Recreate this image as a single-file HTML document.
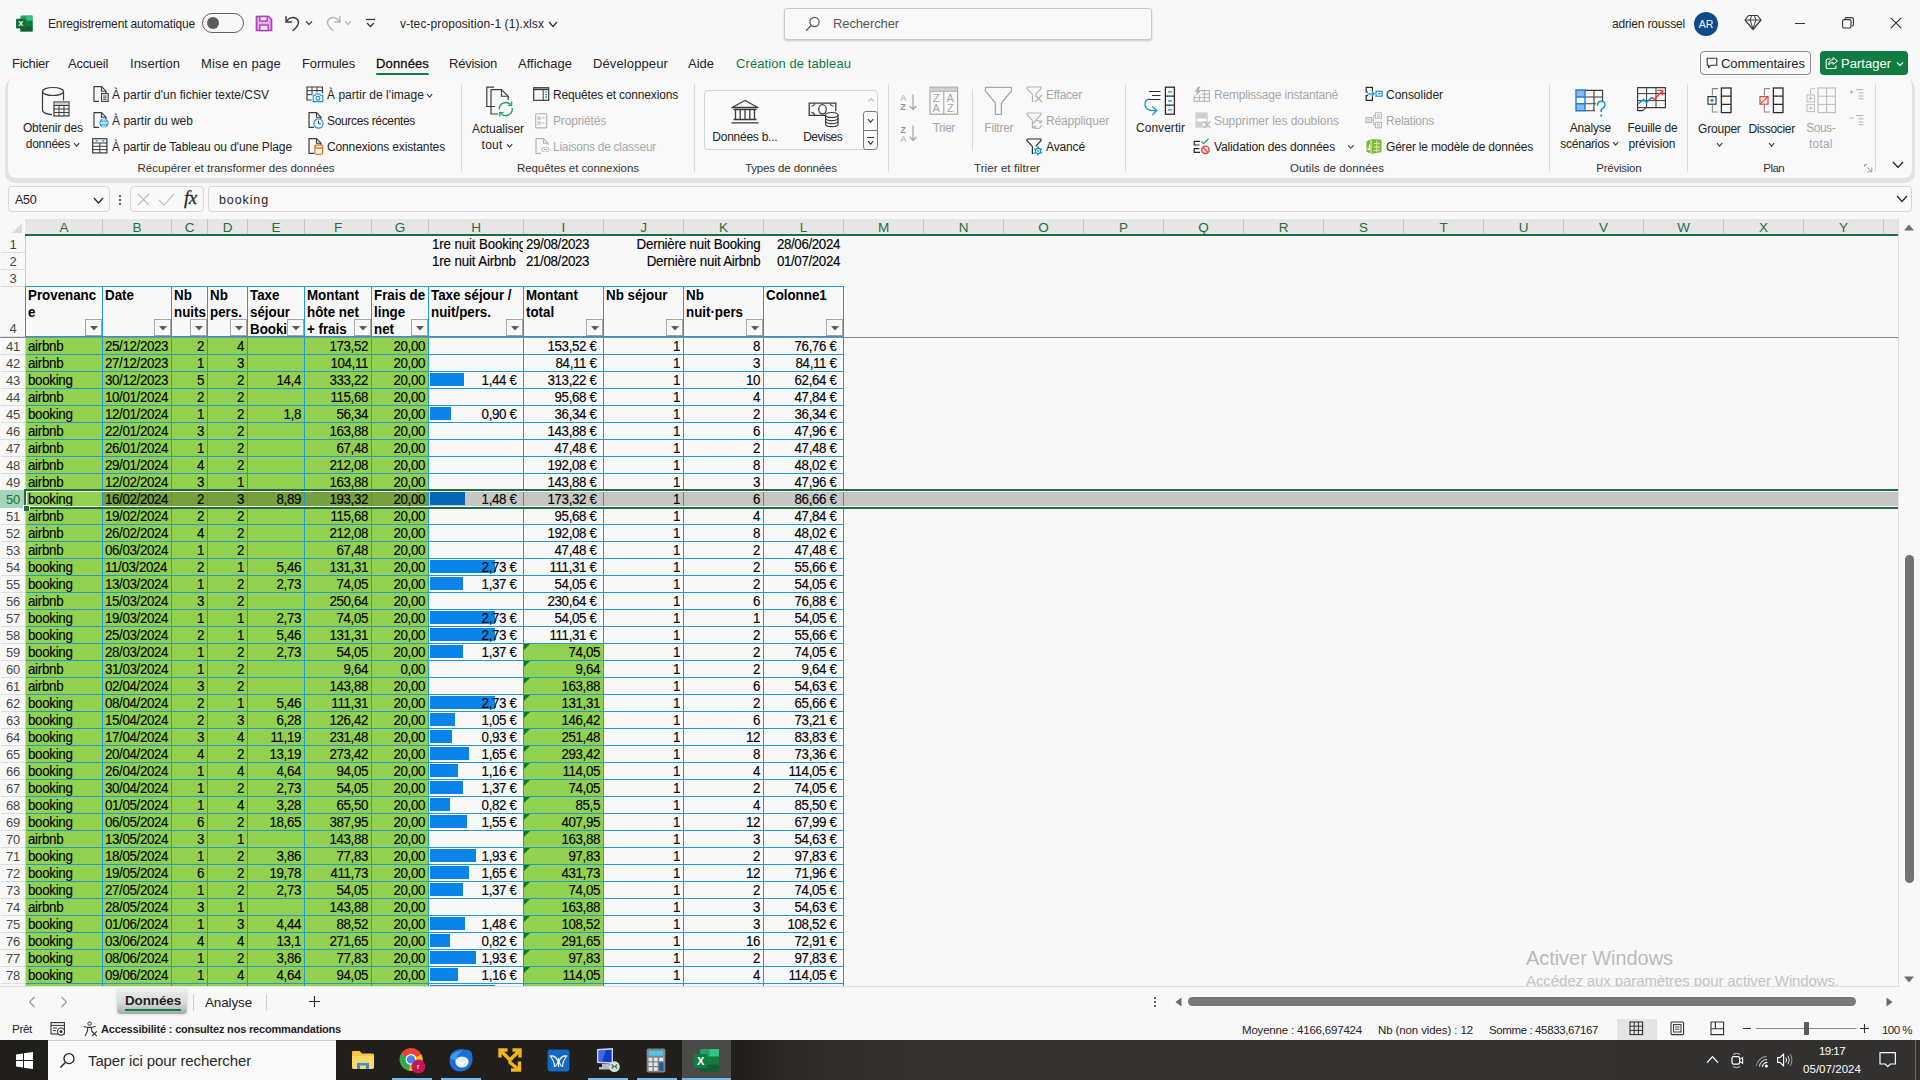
<!DOCTYPE html>
<html lang="fr"><head><meta charset="utf-8"><title>v-tec-proposition-1 (1).xlsx - Excel</title>
<style>
html,body{margin:0;padding:0;}
body{width:1920px;height:1080px;overflow:hidden;position:relative;background:#f8f8f8;font-family:"Liberation Sans",sans-serif;}
#app{position:absolute;left:0;top:0;width:1920px;height:1080px;overflow:hidden;}
#app div,#app svg{position:absolute;}
.t{white-space:nowrap;}
.c{font-family:"Liberation Sans",sans-serif;letter-spacing:-0.36px;-webkit-text-stroke:0.12px currentColor;transform:scaleY(1.035);transform-origin:0 13.1px;}
.b{letter-spacing:0;-webkit-text-stroke:0;}
</style></head><body><div id="app">
<div style="left:0px;top:219px;width:1920px;height:767px;background:#f8f8f8;"></div>
<div style="left:25px;top:219px;width:1873px;height:15px;background:#e6e6e6;"></div>
<div style="left:25px;top:234px;width:1873px;height:2px;background:#1e6e42;"></div>
<div class="t" style="top:220.0px;font-size:13.5px;line-height:16px;color:#1e6e42;left:-236.0px;width:600px;text-align:center;">A</div>
<div class="t" style="top:220.0px;font-size:13.5px;line-height:16px;color:#1e6e42;left:-163.0px;width:600px;text-align:center;">B</div>
<div class="t" style="top:220.0px;font-size:13.5px;line-height:16px;color:#1e6e42;left:-110.5px;width:600px;text-align:center;">C</div>
<div class="t" style="top:220.0px;font-size:13.5px;line-height:16px;color:#1e6e42;left:-72.5px;width:600px;text-align:center;">D</div>
<div class="t" style="top:220.0px;font-size:13.5px;line-height:16px;color:#1e6e42;left:-24.0px;width:600px;text-align:center;">E</div>
<div class="t" style="top:220.0px;font-size:13.5px;line-height:16px;color:#1e6e42;left:38.0px;width:600px;text-align:center;">F</div>
<div class="t" style="top:220.0px;font-size:13.5px;line-height:16px;color:#1e6e42;left:100.0px;width:600px;text-align:center;">G</div>
<div class="t" style="top:220.0px;font-size:13.5px;line-height:16px;color:#1e6e42;left:176.0px;width:600px;text-align:center;">H</div>
<div class="t" style="top:220.0px;font-size:13.5px;line-height:16px;color:#1e6e42;left:263.5px;width:600px;text-align:center;">I</div>
<div class="t" style="top:220.0px;font-size:13.5px;line-height:16px;color:#1e6e42;left:343.5px;width:600px;text-align:center;">J</div>
<div class="t" style="top:220.0px;font-size:13.5px;line-height:16px;color:#1e6e42;left:423.5px;width:600px;text-align:center;">K</div>
<div class="t" style="top:220.0px;font-size:13.5px;line-height:16px;color:#1e6e42;left:503.5px;width:600px;text-align:center;">L</div>
<div class="t" style="top:220.0px;font-size:13.5px;line-height:16px;color:#1e6e42;left:583.5px;width:600px;text-align:center;">M</div>
<div class="t" style="top:220.0px;font-size:13.5px;line-height:16px;color:#1e6e42;left:663.5px;width:600px;text-align:center;">N</div>
<div class="t" style="top:220.0px;font-size:13.5px;line-height:16px;color:#1e6e42;left:743.5px;width:600px;text-align:center;">O</div>
<div class="t" style="top:220.0px;font-size:13.5px;line-height:16px;color:#1e6e42;left:823.5px;width:600px;text-align:center;">P</div>
<div class="t" style="top:220.0px;font-size:13.5px;line-height:16px;color:#1e6e42;left:903.5px;width:600px;text-align:center;">Q</div>
<div class="t" style="top:220.0px;font-size:13.5px;line-height:16px;color:#1e6e42;left:983.5px;width:600px;text-align:center;">R</div>
<div class="t" style="top:220.0px;font-size:13.5px;line-height:16px;color:#1e6e42;left:1063.5px;width:600px;text-align:center;">S</div>
<div class="t" style="top:220.0px;font-size:13.5px;line-height:16px;color:#1e6e42;left:1143.5px;width:600px;text-align:center;">T</div>
<div class="t" style="top:220.0px;font-size:13.5px;line-height:16px;color:#1e6e42;left:1223.5px;width:600px;text-align:center;">U</div>
<div class="t" style="top:220.0px;font-size:13.5px;line-height:16px;color:#1e6e42;left:1303.5px;width:600px;text-align:center;">V</div>
<div class="t" style="top:220.0px;font-size:13.5px;line-height:16px;color:#1e6e42;left:1383.5px;width:600px;text-align:center;">W</div>
<div class="t" style="top:220.0px;font-size:13.5px;line-height:16px;color:#1e6e42;left:1463.5px;width:600px;text-align:center;">X</div>
<div class="t" style="top:220.0px;font-size:13.5px;line-height:16px;color:#1e6e42;left:1543.5px;width:600px;text-align:center;">Y</div>
<div style="left:102px;top:219px;width:1px;height:15px;background:#c6c6c6;"></div>
<div style="left:171px;top:219px;width:1px;height:15px;background:#c6c6c6;"></div>
<div style="left:207px;top:219px;width:1px;height:15px;background:#c6c6c6;"></div>
<div style="left:247px;top:219px;width:1px;height:15px;background:#c6c6c6;"></div>
<div style="left:304px;top:219px;width:1px;height:15px;background:#c6c6c6;"></div>
<div style="left:371px;top:219px;width:1px;height:15px;background:#c6c6c6;"></div>
<div style="left:428px;top:219px;width:1px;height:15px;background:#c6c6c6;"></div>
<div style="left:523px;top:219px;width:1px;height:15px;background:#c6c6c6;"></div>
<div style="left:603px;top:219px;width:1px;height:15px;background:#c6c6c6;"></div>
<div style="left:683px;top:219px;width:1px;height:15px;background:#c6c6c6;"></div>
<div style="left:763px;top:219px;width:1px;height:15px;background:#c6c6c6;"></div>
<div style="left:843px;top:219px;width:1px;height:15px;background:#c6c6c6;"></div>
<div style="left:923px;top:219px;width:1px;height:15px;background:#c6c6c6;"></div>
<div style="left:1003px;top:219px;width:1px;height:15px;background:#c6c6c6;"></div>
<div style="left:1083px;top:219px;width:1px;height:15px;background:#c6c6c6;"></div>
<div style="left:1163px;top:219px;width:1px;height:15px;background:#c6c6c6;"></div>
<div style="left:1243px;top:219px;width:1px;height:15px;background:#c6c6c6;"></div>
<div style="left:1323px;top:219px;width:1px;height:15px;background:#c6c6c6;"></div>
<div style="left:1403px;top:219px;width:1px;height:15px;background:#c6c6c6;"></div>
<div style="left:1483px;top:219px;width:1px;height:15px;background:#c6c6c6;"></div>
<div style="left:1563px;top:219px;width:1px;height:15px;background:#c6c6c6;"></div>
<div style="left:1643px;top:219px;width:1px;height:15px;background:#c6c6c6;"></div>
<div style="left:1723px;top:219px;width:1px;height:15px;background:#c6c6c6;"></div>
<div style="left:1803px;top:219px;width:1px;height:15px;background:#c6c6c6;"></div>
<div style="left:1883px;top:219px;width:1px;height:15px;background:#c6c6c6;"></div>
<div style="left:1963px;top:219px;width:1px;height:15px;background:#c6c6c6;"></div>
<svg style="left:11px;top:223px;" width="12" height="11" viewBox="0 0 12 11" fill="none"><path d="M11 0 V10 H1 Z" fill="#dcdcdc"/></svg>
<div style="left:1px;top:252px;width:24px;height:1px;background:#dcdcdc;"></div>
<div class="t" style="top:236.0px;font-size:13px;line-height:17px;color:#484848;left:-287px;width:600px;text-align:center;letter-spacing:-0.2px;">1</div>
<div style="left:1px;top:269px;width:24px;height:1px;background:#dcdcdc;"></div>
<div class="t" style="top:253.0px;font-size:13px;line-height:17px;color:#484848;left:-287px;width:600px;text-align:center;letter-spacing:-0.2px;">2</div>
<div style="left:1px;top:286px;width:24px;height:1px;background:#dcdcdc;"></div>
<div class="t" style="top:270.0px;font-size:13px;line-height:17px;color:#484848;left:-287px;width:600px;text-align:center;letter-spacing:-0.2px;">3</div>
<div style="left:1px;top:336px;width:24px;height:1px;background:#dcdcdc;"></div>
<div class="t" style="top:320.0px;font-size:13px;line-height:17px;color:#484848;left:-287px;width:600px;text-align:center;letter-spacing:-0.2px;">4</div>
<div style="left:1px;top:354px;width:24px;height:1px;background:#dcdcdc;"></div>
<div class="t" style="top:338.0px;font-size:13px;line-height:17px;color:#484848;left:-287px;width:600px;text-align:center;letter-spacing:-0.2px;">41</div>
<div style="left:1px;top:371px;width:24px;height:1px;background:#dcdcdc;"></div>
<div class="t" style="top:355.0px;font-size:13px;line-height:17px;color:#484848;left:-287px;width:600px;text-align:center;letter-spacing:-0.2px;">42</div>
<div style="left:1px;top:388px;width:24px;height:1px;background:#dcdcdc;"></div>
<div class="t" style="top:372.0px;font-size:13px;line-height:17px;color:#484848;left:-287px;width:600px;text-align:center;letter-spacing:-0.2px;">43</div>
<div style="left:1px;top:405px;width:24px;height:1px;background:#dcdcdc;"></div>
<div class="t" style="top:389.0px;font-size:13px;line-height:17px;color:#484848;left:-287px;width:600px;text-align:center;letter-spacing:-0.2px;">44</div>
<div style="left:1px;top:422px;width:24px;height:1px;background:#dcdcdc;"></div>
<div class="t" style="top:406.0px;font-size:13px;line-height:17px;color:#484848;left:-287px;width:600px;text-align:center;letter-spacing:-0.2px;">45</div>
<div style="left:1px;top:439px;width:24px;height:1px;background:#dcdcdc;"></div>
<div class="t" style="top:423.0px;font-size:13px;line-height:17px;color:#484848;left:-287px;width:600px;text-align:center;letter-spacing:-0.2px;">46</div>
<div style="left:1px;top:456px;width:24px;height:1px;background:#dcdcdc;"></div>
<div class="t" style="top:440.0px;font-size:13px;line-height:17px;color:#484848;left:-287px;width:600px;text-align:center;letter-spacing:-0.2px;">47</div>
<div style="left:1px;top:473px;width:24px;height:1px;background:#dcdcdc;"></div>
<div class="t" style="top:457.0px;font-size:13px;line-height:17px;color:#484848;left:-287px;width:600px;text-align:center;letter-spacing:-0.2px;">48</div>
<div style="left:1px;top:490px;width:24px;height:1px;background:#dcdcdc;"></div>
<div class="t" style="top:474.0px;font-size:13px;line-height:17px;color:#484848;left:-287px;width:600px;text-align:center;letter-spacing:-0.2px;">49</div>
<div style="left:0px;top:490px;width:25px;height:18px;background:#a3d6b8;"></div>
<div class="t" style="top:491.0px;font-size:13px;line-height:17px;color:#1e6e42;left:-287px;width:600px;text-align:center;letter-spacing:-0.2px;">50</div>
<div style="left:1px;top:524px;width:24px;height:1px;background:#dcdcdc;"></div>
<div class="t" style="top:508.0px;font-size:13px;line-height:17px;color:#484848;left:-287px;width:600px;text-align:center;letter-spacing:-0.2px;">51</div>
<div style="left:1px;top:541px;width:24px;height:1px;background:#dcdcdc;"></div>
<div class="t" style="top:525.0px;font-size:13px;line-height:17px;color:#484848;left:-287px;width:600px;text-align:center;letter-spacing:-0.2px;">52</div>
<div style="left:1px;top:558px;width:24px;height:1px;background:#dcdcdc;"></div>
<div class="t" style="top:542.0px;font-size:13px;line-height:17px;color:#484848;left:-287px;width:600px;text-align:center;letter-spacing:-0.2px;">53</div>
<div style="left:1px;top:575px;width:24px;height:1px;background:#dcdcdc;"></div>
<div class="t" style="top:559.0px;font-size:13px;line-height:17px;color:#484848;left:-287px;width:600px;text-align:center;letter-spacing:-0.2px;">54</div>
<div style="left:1px;top:592px;width:24px;height:1px;background:#dcdcdc;"></div>
<div class="t" style="top:576.0px;font-size:13px;line-height:17px;color:#484848;left:-287px;width:600px;text-align:center;letter-spacing:-0.2px;">55</div>
<div style="left:1px;top:609px;width:24px;height:1px;background:#dcdcdc;"></div>
<div class="t" style="top:593.0px;font-size:13px;line-height:17px;color:#484848;left:-287px;width:600px;text-align:center;letter-spacing:-0.2px;">56</div>
<div style="left:1px;top:626px;width:24px;height:1px;background:#dcdcdc;"></div>
<div class="t" style="top:610.0px;font-size:13px;line-height:17px;color:#484848;left:-287px;width:600px;text-align:center;letter-spacing:-0.2px;">57</div>
<div style="left:1px;top:643px;width:24px;height:1px;background:#dcdcdc;"></div>
<div class="t" style="top:627.0px;font-size:13px;line-height:17px;color:#484848;left:-287px;width:600px;text-align:center;letter-spacing:-0.2px;">58</div>
<div style="left:1px;top:660px;width:24px;height:1px;background:#dcdcdc;"></div>
<div class="t" style="top:644.0px;font-size:13px;line-height:17px;color:#484848;left:-287px;width:600px;text-align:center;letter-spacing:-0.2px;">59</div>
<div style="left:1px;top:677px;width:24px;height:1px;background:#dcdcdc;"></div>
<div class="t" style="top:661.0px;font-size:13px;line-height:17px;color:#484848;left:-287px;width:600px;text-align:center;letter-spacing:-0.2px;">60</div>
<div style="left:1px;top:694px;width:24px;height:1px;background:#dcdcdc;"></div>
<div class="t" style="top:678.0px;font-size:13px;line-height:17px;color:#484848;left:-287px;width:600px;text-align:center;letter-spacing:-0.2px;">61</div>
<div style="left:1px;top:711px;width:24px;height:1px;background:#dcdcdc;"></div>
<div class="t" style="top:695.0px;font-size:13px;line-height:17px;color:#484848;left:-287px;width:600px;text-align:center;letter-spacing:-0.2px;">62</div>
<div style="left:1px;top:728px;width:24px;height:1px;background:#dcdcdc;"></div>
<div class="t" style="top:712.0px;font-size:13px;line-height:17px;color:#484848;left:-287px;width:600px;text-align:center;letter-spacing:-0.2px;">63</div>
<div style="left:1px;top:745px;width:24px;height:1px;background:#dcdcdc;"></div>
<div class="t" style="top:729.0px;font-size:13px;line-height:17px;color:#484848;left:-287px;width:600px;text-align:center;letter-spacing:-0.2px;">64</div>
<div style="left:1px;top:762px;width:24px;height:1px;background:#dcdcdc;"></div>
<div class="t" style="top:746.0px;font-size:13px;line-height:17px;color:#484848;left:-287px;width:600px;text-align:center;letter-spacing:-0.2px;">65</div>
<div style="left:1px;top:779px;width:24px;height:1px;background:#dcdcdc;"></div>
<div class="t" style="top:763.0px;font-size:13px;line-height:17px;color:#484848;left:-287px;width:600px;text-align:center;letter-spacing:-0.2px;">66</div>
<div style="left:1px;top:796px;width:24px;height:1px;background:#dcdcdc;"></div>
<div class="t" style="top:780.0px;font-size:13px;line-height:17px;color:#484848;left:-287px;width:600px;text-align:center;letter-spacing:-0.2px;">67</div>
<div style="left:1px;top:813px;width:24px;height:1px;background:#dcdcdc;"></div>
<div class="t" style="top:797.0px;font-size:13px;line-height:17px;color:#484848;left:-287px;width:600px;text-align:center;letter-spacing:-0.2px;">68</div>
<div style="left:1px;top:830px;width:24px;height:1px;background:#dcdcdc;"></div>
<div class="t" style="top:814.0px;font-size:13px;line-height:17px;color:#484848;left:-287px;width:600px;text-align:center;letter-spacing:-0.2px;">69</div>
<div style="left:1px;top:847px;width:24px;height:1px;background:#dcdcdc;"></div>
<div class="t" style="top:831.0px;font-size:13px;line-height:17px;color:#484848;left:-287px;width:600px;text-align:center;letter-spacing:-0.2px;">70</div>
<div style="left:1px;top:864px;width:24px;height:1px;background:#dcdcdc;"></div>
<div class="t" style="top:848.0px;font-size:13px;line-height:17px;color:#484848;left:-287px;width:600px;text-align:center;letter-spacing:-0.2px;">71</div>
<div style="left:1px;top:881px;width:24px;height:1px;background:#dcdcdc;"></div>
<div class="t" style="top:865.0px;font-size:13px;line-height:17px;color:#484848;left:-287px;width:600px;text-align:center;letter-spacing:-0.2px;">72</div>
<div style="left:1px;top:898px;width:24px;height:1px;background:#dcdcdc;"></div>
<div class="t" style="top:882.0px;font-size:13px;line-height:17px;color:#484848;left:-287px;width:600px;text-align:center;letter-spacing:-0.2px;">73</div>
<div style="left:1px;top:915px;width:24px;height:1px;background:#dcdcdc;"></div>
<div class="t" style="top:899.0px;font-size:13px;line-height:17px;color:#484848;left:-287px;width:600px;text-align:center;letter-spacing:-0.2px;">74</div>
<div style="left:1px;top:932px;width:24px;height:1px;background:#dcdcdc;"></div>
<div class="t" style="top:916.0px;font-size:13px;line-height:17px;color:#484848;left:-287px;width:600px;text-align:center;letter-spacing:-0.2px;">75</div>
<div style="left:1px;top:949px;width:24px;height:1px;background:#dcdcdc;"></div>
<div class="t" style="top:933.0px;font-size:13px;line-height:17px;color:#484848;left:-287px;width:600px;text-align:center;letter-spacing:-0.2px;">76</div>
<div style="left:1px;top:966px;width:24px;height:1px;background:#dcdcdc;"></div>
<div class="t" style="top:950.0px;font-size:13px;line-height:17px;color:#484848;left:-287px;width:600px;text-align:center;letter-spacing:-0.2px;">77</div>
<div style="left:1px;top:983px;width:24px;height:1px;background:#dcdcdc;"></div>
<div class="t" style="top:967.0px;font-size:13px;line-height:17px;color:#484848;left:-287px;width:600px;text-align:center;letter-spacing:-0.2px;">78</div>
<div class="t c" style="top:236.0px;height:17px;line-height:17px;font-size:13.33px;color:#000;left:432px;letter-spacing:-0.14px;width:91px;overflow:hidden;">1re nuit Booking</div>
<div class="t c" style="top:253.0px;height:17px;line-height:17px;font-size:13.33px;color:#000;left:432px;letter-spacing:-0.14px;">1re nuit Airbnb</div>
<div class="t c" style="top:236.0px;height:17px;line-height:17px;font-size:13.33px;color:#000;left:526px;">29/08/2023</div>
<div class="t c" style="top:253.0px;height:17px;line-height:17px;font-size:13.33px;color:#000;left:526px;">21/08/2023</div>
<div class="t c" style="top:236.0px;height:17px;line-height:17px;font-size:13.33px;color:#000;right:1159.5px;letter-spacing:-0.2px;">Dernière nuit Booking</div>
<div class="t c" style="top:253.0px;height:17px;line-height:17px;font-size:13.33px;color:#000;right:1159.5px;letter-spacing:-0.2px;">Dernière nuit Airbnb</div>
<div class="t c" style="top:236.0px;height:17px;line-height:17px;font-size:13.33px;color:#000;right:1080px;">28/06/2024</div>
<div class="t c" style="top:253.0px;height:17px;line-height:17px;font-size:13.33px;color:#000;right:1080px;">01/07/2024</div>
<div class="t c b" style="top:287.0px;height:17px;line-height:17px;font-size:13.33px;color:#000;font-weight:700;left:28px;">Provenanc</div>
<div class="t c b" style="top:304.0px;height:17px;line-height:17px;font-size:13.33px;color:#000;font-weight:700;left:28px;">e</div>
<div style="left:85px;top:319px;width:17px;height:17px;background:#f8f8f8;border:1px solid #a6a6a6;box-sizing:border-box;"></div>
<svg style="left:89.5px;top:326px;" width="8" height="5" viewBox="0 0 8 5" fill="none"><path d="M0 0 H8 L4 4.5 Z" fill="#5a5a5a"/></svg>
<div class="t c b" style="top:287.0px;height:17px;line-height:17px;font-size:13.33px;color:#000;font-weight:700;left:105px;">Date</div>
<div style="left:154px;top:319px;width:17px;height:17px;background:#f8f8f8;border:1px solid #a6a6a6;box-sizing:border-box;"></div>
<svg style="left:158.5px;top:326px;" width="8" height="5" viewBox="0 0 8 5" fill="none"><path d="M0 0 H8 L4 4.5 Z" fill="#5a5a5a"/></svg>
<div class="t c b" style="top:287.0px;height:17px;line-height:17px;font-size:13.33px;color:#000;font-weight:700;left:174px;">Nb</div>
<div class="t c b" style="top:304.0px;height:17px;line-height:17px;font-size:13.33px;color:#000;font-weight:700;left:174px;">nuits</div>
<div style="left:190px;top:319px;width:17px;height:17px;background:#f8f8f8;border:1px solid #a6a6a6;box-sizing:border-box;"></div>
<svg style="left:194.5px;top:326px;" width="8" height="5" viewBox="0 0 8 5" fill="none"><path d="M0 0 H8 L4 4.5 Z" fill="#5a5a5a"/></svg>
<div class="t c b" style="top:287.0px;height:17px;line-height:17px;font-size:13.33px;color:#000;font-weight:700;left:210px;">Nb</div>
<div class="t c b" style="top:304.0px;height:17px;line-height:17px;font-size:13.33px;color:#000;font-weight:700;left:210px;">pers.</div>
<div style="left:230px;top:319px;width:17px;height:17px;background:#f8f8f8;border:1px solid #a6a6a6;box-sizing:border-box;"></div>
<svg style="left:234.5px;top:326px;" width="8" height="5" viewBox="0 0 8 5" fill="none"><path d="M0 0 H8 L4 4.5 Z" fill="#5a5a5a"/></svg>
<div class="t c b" style="top:287.0px;height:17px;line-height:17px;font-size:13.33px;color:#000;font-weight:700;left:250px;">Taxe</div>
<div class="t c b" style="top:304.0px;height:17px;line-height:17px;font-size:13.33px;color:#000;font-weight:700;left:250px;">séjour</div>
<div class="t c b" style="top:321.0px;height:17px;line-height:17px;font-size:13.33px;color:#000;font-weight:700;left:250px;">Booki</div>
<div style="left:287px;top:319px;width:17px;height:17px;background:#f8f8f8;border:1px solid #a6a6a6;box-sizing:border-box;"></div>
<svg style="left:291.5px;top:326px;" width="8" height="5" viewBox="0 0 8 5" fill="none"><path d="M0 0 H8 L4 4.5 Z" fill="#5a5a5a"/></svg>
<div class="t c b" style="top:287.0px;height:17px;line-height:17px;font-size:13.33px;color:#000;font-weight:700;left:307px;">Montant</div>
<div class="t c b" style="top:304.0px;height:17px;line-height:17px;font-size:13.33px;color:#000;font-weight:700;left:307px;">hôte net</div>
<div class="t c b" style="top:321.0px;height:17px;line-height:17px;font-size:13.33px;color:#000;font-weight:700;left:307px;">+ frais</div>
<div style="left:354px;top:319px;width:17px;height:17px;background:#f8f8f8;border:1px solid #a6a6a6;box-sizing:border-box;"></div>
<svg style="left:358.5px;top:326px;" width="8" height="5" viewBox="0 0 8 5" fill="none"><path d="M0 0 H8 L4 4.5 Z" fill="#5a5a5a"/></svg>
<div class="t c b" style="top:287.0px;height:17px;line-height:17px;font-size:13.33px;color:#000;font-weight:700;left:374px;">Frais de</div>
<div class="t c b" style="top:304.0px;height:17px;line-height:17px;font-size:13.33px;color:#000;font-weight:700;left:374px;">linge</div>
<div class="t c b" style="top:321.0px;height:17px;line-height:17px;font-size:13.33px;color:#000;font-weight:700;left:374px;">net</div>
<div style="left:411px;top:319px;width:17px;height:17px;background:#f8f8f8;border:1px solid #a6a6a6;box-sizing:border-box;"></div>
<svg style="left:415.5px;top:326px;" width="8" height="5" viewBox="0 0 8 5" fill="none"><path d="M0 0 H8 L4 4.5 Z" fill="#5a5a5a"/></svg>
<div class="t c b" style="top:287.0px;height:17px;line-height:17px;font-size:13.33px;color:#000;font-weight:700;left:431px;">Taxe séjour /</div>
<div class="t c b" style="top:304.0px;height:17px;line-height:17px;font-size:13.33px;color:#000;font-weight:700;left:431px;">nuit/pers.</div>
<div style="left:506px;top:319px;width:17px;height:17px;background:#f8f8f8;border:1px solid #a6a6a6;box-sizing:border-box;"></div>
<svg style="left:510.5px;top:326px;" width="8" height="5" viewBox="0 0 8 5" fill="none"><path d="M0 0 H8 L4 4.5 Z" fill="#5a5a5a"/></svg>
<div class="t c b" style="top:287.0px;height:17px;line-height:17px;font-size:13.33px;color:#000;font-weight:700;left:526px;">Montant</div>
<div class="t c b" style="top:304.0px;height:17px;line-height:17px;font-size:13.33px;color:#000;font-weight:700;left:526px;">total</div>
<div style="left:586px;top:319px;width:17px;height:17px;background:#f8f8f8;border:1px solid #a6a6a6;box-sizing:border-box;"></div>
<svg style="left:590.5px;top:326px;" width="8" height="5" viewBox="0 0 8 5" fill="none"><path d="M0 0 H8 L4 4.5 Z" fill="#5a5a5a"/></svg>
<div class="t c b" style="top:287.0px;height:17px;line-height:17px;font-size:13.33px;color:#000;font-weight:700;left:606px;">Nb séjour</div>
<div style="left:666px;top:319px;width:17px;height:17px;background:#f8f8f8;border:1px solid #a6a6a6;box-sizing:border-box;"></div>
<svg style="left:670.5px;top:326px;" width="8" height="5" viewBox="0 0 8 5" fill="none"><path d="M0 0 H8 L4 4.5 Z" fill="#5a5a5a"/></svg>
<div class="t c b" style="top:287.0px;height:17px;line-height:17px;font-size:13.33px;color:#000;font-weight:700;left:686px;">Nb</div>
<div class="t c b" style="top:304.0px;height:17px;line-height:17px;font-size:13.33px;color:#000;font-weight:700;left:686px;">nuit·pers</div>
<div style="left:746px;top:319px;width:17px;height:17px;background:#f8f8f8;border:1px solid #a6a6a6;box-sizing:border-box;"></div>
<svg style="left:750.5px;top:326px;" width="8" height="5" viewBox="0 0 8 5" fill="none"><path d="M0 0 H8 L4 4.5 Z" fill="#5a5a5a"/></svg>
<div class="t c b" style="top:287.0px;height:17px;line-height:17px;font-size:13.33px;color:#000;font-weight:700;left:766px;">Colonne1</div>
<div style="left:826px;top:319px;width:17px;height:17px;background:#f8f8f8;border:1px solid #a6a6a6;box-sizing:border-box;"></div>
<svg style="left:830.5px;top:326px;" width="8" height="5" viewBox="0 0 8 5" fill="none"><path d="M0 0 H8 L4 4.5 Z" fill="#5a5a5a"/></svg>
<div style="left:26px;top:338px;width:402px;height:648px;background:#92d050;"></div>
<div style="left:524px;top:644px;width:79px;height:342px;background:#92d050;"></div>
<div style="left:102px;top:491px;width:1796px;height:17px;background:#c6c7c4;"></div>
<div style="left:102px;top:491px;width:326px;height:17px;background:#769f3e;"></div>
<div class="t c" style="top:338.0px;height:17px;line-height:17px;font-size:13.33px;color:#000;left:28px;letter-spacing:-0.3px;">airbnb</div>
<div class="t c" style="top:338.0px;height:17px;line-height:17px;font-size:13.33px;color:#000;left:105px;">25/12/2023</div>
<div class="t c" style="top:338.0px;height:17px;line-height:17px;font-size:13.33px;color:#000;right:1716px;">2</div>
<div class="t c" style="top:338.0px;height:17px;line-height:17px;font-size:13.33px;color:#000;right:1676px;">4</div>
<div class="t c" style="top:338.0px;height:17px;line-height:17px;font-size:13.33px;color:#000;right:1552px;">173,52</div>
<div class="t c" style="top:338.0px;height:17px;line-height:17px;font-size:13.33px;color:#000;right:1495px;">20,00</div>
<div class="t c" style="top:338.0px;height:17px;line-height:17px;font-size:13.33px;color:#000;right:1323.5px;">153,52 €</div>
<div class="t c" style="top:338.0px;height:17px;line-height:17px;font-size:13.33px;color:#000;right:1240px;">1</div>
<div class="t c" style="top:338.0px;height:17px;line-height:17px;font-size:13.33px;color:#000;right:1160px;">8</div>
<div class="t c" style="top:338.0px;height:17px;line-height:17px;font-size:13.33px;color:#000;right:1083.5px;">76,76 €</div>
<div class="t c" style="top:355.0px;height:17px;line-height:17px;font-size:13.33px;color:#000;left:28px;letter-spacing:-0.3px;">airbnb</div>
<div class="t c" style="top:355.0px;height:17px;line-height:17px;font-size:13.33px;color:#000;left:105px;">27/12/2023</div>
<div class="t c" style="top:355.0px;height:17px;line-height:17px;font-size:13.33px;color:#000;right:1716px;">1</div>
<div class="t c" style="top:355.0px;height:17px;line-height:17px;font-size:13.33px;color:#000;right:1676px;">3</div>
<div class="t c" style="top:355.0px;height:17px;line-height:17px;font-size:13.33px;color:#000;right:1552px;">104,11</div>
<div class="t c" style="top:355.0px;height:17px;line-height:17px;font-size:13.33px;color:#000;right:1495px;">20,00</div>
<div class="t c" style="top:355.0px;height:17px;line-height:17px;font-size:13.33px;color:#000;right:1323.5px;">84,11 €</div>
<div class="t c" style="top:355.0px;height:17px;line-height:17px;font-size:13.33px;color:#000;right:1240px;">1</div>
<div class="t c" style="top:355.0px;height:17px;line-height:17px;font-size:13.33px;color:#000;right:1160px;">3</div>
<div class="t c" style="top:355.0px;height:17px;line-height:17px;font-size:13.33px;color:#000;right:1083.5px;">84,11 €</div>
<div class="t c" style="top:372.0px;height:17px;line-height:17px;font-size:13.33px;color:#000;left:28px;letter-spacing:-0.3px;">booking</div>
<div class="t c" style="top:372.0px;height:17px;line-height:17px;font-size:13.33px;color:#000;left:105px;">30/12/2023</div>
<div class="t c" style="top:372.0px;height:17px;line-height:17px;font-size:13.33px;color:#000;right:1716px;">5</div>
<div class="t c" style="top:372.0px;height:17px;line-height:17px;font-size:13.33px;color:#000;right:1676px;">2</div>
<div class="t c" style="top:372.0px;height:17px;line-height:17px;font-size:13.33px;color:#000;right:1619px;">14,4</div>
<div class="t c" style="top:372.0px;height:17px;line-height:17px;font-size:13.33px;color:#000;right:1552px;">333,22</div>
<div class="t c" style="top:372.0px;height:17px;line-height:17px;font-size:13.33px;color:#000;right:1495px;">20,00</div>
<div style="left:430px;top:373px;width:34px;height:13px;background:#0a84e8;"></div>
<div class="t c" style="top:372.0px;height:17px;line-height:17px;font-size:13.33px;color:#000;right:1403.5px;">1,44 €</div>
<div class="t c" style="top:372.0px;height:17px;line-height:17px;font-size:13.33px;color:#000;right:1323.5px;">313,22 €</div>
<div class="t c" style="top:372.0px;height:17px;line-height:17px;font-size:13.33px;color:#000;right:1240px;">1</div>
<div class="t c" style="top:372.0px;height:17px;line-height:17px;font-size:13.33px;color:#000;right:1160px;">10</div>
<div class="t c" style="top:372.0px;height:17px;line-height:17px;font-size:13.33px;color:#000;right:1083.5px;">62,64 €</div>
<div class="t c" style="top:389.0px;height:17px;line-height:17px;font-size:13.33px;color:#000;left:28px;letter-spacing:-0.3px;">airbnb</div>
<div class="t c" style="top:389.0px;height:17px;line-height:17px;font-size:13.33px;color:#000;left:105px;">10/01/2024</div>
<div class="t c" style="top:389.0px;height:17px;line-height:17px;font-size:13.33px;color:#000;right:1716px;">2</div>
<div class="t c" style="top:389.0px;height:17px;line-height:17px;font-size:13.33px;color:#000;right:1676px;">2</div>
<div class="t c" style="top:389.0px;height:17px;line-height:17px;font-size:13.33px;color:#000;right:1552px;">115,68</div>
<div class="t c" style="top:389.0px;height:17px;line-height:17px;font-size:13.33px;color:#000;right:1495px;">20,00</div>
<div class="t c" style="top:389.0px;height:17px;line-height:17px;font-size:13.33px;color:#000;right:1323.5px;">95,68 €</div>
<div class="t c" style="top:389.0px;height:17px;line-height:17px;font-size:13.33px;color:#000;right:1240px;">1</div>
<div class="t c" style="top:389.0px;height:17px;line-height:17px;font-size:13.33px;color:#000;right:1160px;">4</div>
<div class="t c" style="top:389.0px;height:17px;line-height:17px;font-size:13.33px;color:#000;right:1083.5px;">47,84 €</div>
<div class="t c" style="top:406.0px;height:17px;line-height:17px;font-size:13.33px;color:#000;left:28px;letter-spacing:-0.3px;">booking</div>
<div class="t c" style="top:406.0px;height:17px;line-height:17px;font-size:13.33px;color:#000;left:105px;">12/01/2024</div>
<div class="t c" style="top:406.0px;height:17px;line-height:17px;font-size:13.33px;color:#000;right:1716px;">1</div>
<div class="t c" style="top:406.0px;height:17px;line-height:17px;font-size:13.33px;color:#000;right:1676px;">2</div>
<div class="t c" style="top:406.0px;height:17px;line-height:17px;font-size:13.33px;color:#000;right:1619px;">1,8</div>
<div class="t c" style="top:406.0px;height:17px;line-height:17px;font-size:13.33px;color:#000;right:1552px;">56,34</div>
<div class="t c" style="top:406.0px;height:17px;line-height:17px;font-size:13.33px;color:#000;right:1495px;">20,00</div>
<div style="left:430px;top:407px;width:21px;height:13px;background:#0a84e8;"></div>
<div class="t c" style="top:406.0px;height:17px;line-height:17px;font-size:13.33px;color:#000;right:1403.5px;">0,90 €</div>
<div class="t c" style="top:406.0px;height:17px;line-height:17px;font-size:13.33px;color:#000;right:1323.5px;">36,34 €</div>
<div class="t c" style="top:406.0px;height:17px;line-height:17px;font-size:13.33px;color:#000;right:1240px;">1</div>
<div class="t c" style="top:406.0px;height:17px;line-height:17px;font-size:13.33px;color:#000;right:1160px;">2</div>
<div class="t c" style="top:406.0px;height:17px;line-height:17px;font-size:13.33px;color:#000;right:1083.5px;">36,34 €</div>
<div class="t c" style="top:423.0px;height:17px;line-height:17px;font-size:13.33px;color:#000;left:28px;letter-spacing:-0.3px;">airbnb</div>
<div class="t c" style="top:423.0px;height:17px;line-height:17px;font-size:13.33px;color:#000;left:105px;">22/01/2024</div>
<div class="t c" style="top:423.0px;height:17px;line-height:17px;font-size:13.33px;color:#000;right:1716px;">3</div>
<div class="t c" style="top:423.0px;height:17px;line-height:17px;font-size:13.33px;color:#000;right:1676px;">2</div>
<div class="t c" style="top:423.0px;height:17px;line-height:17px;font-size:13.33px;color:#000;right:1552px;">163,88</div>
<div class="t c" style="top:423.0px;height:17px;line-height:17px;font-size:13.33px;color:#000;right:1495px;">20,00</div>
<div class="t c" style="top:423.0px;height:17px;line-height:17px;font-size:13.33px;color:#000;right:1323.5px;">143,88 €</div>
<div class="t c" style="top:423.0px;height:17px;line-height:17px;font-size:13.33px;color:#000;right:1240px;">1</div>
<div class="t c" style="top:423.0px;height:17px;line-height:17px;font-size:13.33px;color:#000;right:1160px;">6</div>
<div class="t c" style="top:423.0px;height:17px;line-height:17px;font-size:13.33px;color:#000;right:1083.5px;">47,96 €</div>
<div class="t c" style="top:440.0px;height:17px;line-height:17px;font-size:13.33px;color:#000;left:28px;letter-spacing:-0.3px;">airbnb</div>
<div class="t c" style="top:440.0px;height:17px;line-height:17px;font-size:13.33px;color:#000;left:105px;">26/01/2024</div>
<div class="t c" style="top:440.0px;height:17px;line-height:17px;font-size:13.33px;color:#000;right:1716px;">1</div>
<div class="t c" style="top:440.0px;height:17px;line-height:17px;font-size:13.33px;color:#000;right:1676px;">2</div>
<div class="t c" style="top:440.0px;height:17px;line-height:17px;font-size:13.33px;color:#000;right:1552px;">67,48</div>
<div class="t c" style="top:440.0px;height:17px;line-height:17px;font-size:13.33px;color:#000;right:1495px;">20,00</div>
<div class="t c" style="top:440.0px;height:17px;line-height:17px;font-size:13.33px;color:#000;right:1323.5px;">47,48 €</div>
<div class="t c" style="top:440.0px;height:17px;line-height:17px;font-size:13.33px;color:#000;right:1240px;">1</div>
<div class="t c" style="top:440.0px;height:17px;line-height:17px;font-size:13.33px;color:#000;right:1160px;">2</div>
<div class="t c" style="top:440.0px;height:17px;line-height:17px;font-size:13.33px;color:#000;right:1083.5px;">47,48 €</div>
<div class="t c" style="top:457.0px;height:17px;line-height:17px;font-size:13.33px;color:#000;left:28px;letter-spacing:-0.3px;">airbnb</div>
<div class="t c" style="top:457.0px;height:17px;line-height:17px;font-size:13.33px;color:#000;left:105px;">29/01/2024</div>
<div class="t c" style="top:457.0px;height:17px;line-height:17px;font-size:13.33px;color:#000;right:1716px;">4</div>
<div class="t c" style="top:457.0px;height:17px;line-height:17px;font-size:13.33px;color:#000;right:1676px;">2</div>
<div class="t c" style="top:457.0px;height:17px;line-height:17px;font-size:13.33px;color:#000;right:1552px;">212,08</div>
<div class="t c" style="top:457.0px;height:17px;line-height:17px;font-size:13.33px;color:#000;right:1495px;">20,00</div>
<div class="t c" style="top:457.0px;height:17px;line-height:17px;font-size:13.33px;color:#000;right:1323.5px;">192,08 €</div>
<div class="t c" style="top:457.0px;height:17px;line-height:17px;font-size:13.33px;color:#000;right:1240px;">1</div>
<div class="t c" style="top:457.0px;height:17px;line-height:17px;font-size:13.33px;color:#000;right:1160px;">8</div>
<div class="t c" style="top:457.0px;height:17px;line-height:17px;font-size:13.33px;color:#000;right:1083.5px;">48,02 €</div>
<div class="t c" style="top:474.0px;height:17px;line-height:17px;font-size:13.33px;color:#000;left:28px;letter-spacing:-0.3px;">airbnb</div>
<div class="t c" style="top:474.0px;height:17px;line-height:17px;font-size:13.33px;color:#000;left:105px;">12/02/2024</div>
<div class="t c" style="top:474.0px;height:17px;line-height:17px;font-size:13.33px;color:#000;right:1716px;">3</div>
<div class="t c" style="top:474.0px;height:17px;line-height:17px;font-size:13.33px;color:#000;right:1676px;">1</div>
<div class="t c" style="top:474.0px;height:17px;line-height:17px;font-size:13.33px;color:#000;right:1552px;">163,88</div>
<div class="t c" style="top:474.0px;height:17px;line-height:17px;font-size:13.33px;color:#000;right:1495px;">20,00</div>
<div class="t c" style="top:474.0px;height:17px;line-height:17px;font-size:13.33px;color:#000;right:1323.5px;">143,88 €</div>
<div class="t c" style="top:474.0px;height:17px;line-height:17px;font-size:13.33px;color:#000;right:1240px;">1</div>
<div class="t c" style="top:474.0px;height:17px;line-height:17px;font-size:13.33px;color:#000;right:1160px;">3</div>
<div class="t c" style="top:474.0px;height:17px;line-height:17px;font-size:13.33px;color:#000;right:1083.5px;">47,96 €</div>
<div class="t c" style="top:491.0px;height:17px;line-height:17px;font-size:13.33px;color:#000;left:28px;letter-spacing:-0.3px;">booking</div>
<div class="t c" style="top:491.0px;height:17px;line-height:17px;font-size:13.33px;color:#000;left:105px;">16/02/2024</div>
<div class="t c" style="top:491.0px;height:17px;line-height:17px;font-size:13.33px;color:#000;right:1716px;">2</div>
<div class="t c" style="top:491.0px;height:17px;line-height:17px;font-size:13.33px;color:#000;right:1676px;">3</div>
<div class="t c" style="top:491.0px;height:17px;line-height:17px;font-size:13.33px;color:#000;right:1619px;">8,89</div>
<div class="t c" style="top:491.0px;height:17px;line-height:17px;font-size:13.33px;color:#000;right:1552px;">193,32</div>
<div class="t c" style="top:491.0px;height:17px;line-height:17px;font-size:13.33px;color:#000;right:1495px;">20,00</div>
<div style="left:430px;top:492px;width:35px;height:13px;background:#0667b8;"></div>
<div class="t c" style="top:491.0px;height:17px;line-height:17px;font-size:13.33px;color:#000;right:1403.5px;">1,48 €</div>
<div class="t c" style="top:491.0px;height:17px;line-height:17px;font-size:13.33px;color:#000;right:1323.5px;">173,32 €</div>
<div class="t c" style="top:491.0px;height:17px;line-height:17px;font-size:13.33px;color:#000;right:1240px;">1</div>
<div class="t c" style="top:491.0px;height:17px;line-height:17px;font-size:13.33px;color:#000;right:1160px;">6</div>
<div class="t c" style="top:491.0px;height:17px;line-height:17px;font-size:13.33px;color:#000;right:1083.5px;">86,66 €</div>
<div class="t c" style="top:508.0px;height:17px;line-height:17px;font-size:13.33px;color:#000;left:28px;letter-spacing:-0.3px;">airbnb</div>
<div class="t c" style="top:508.0px;height:17px;line-height:17px;font-size:13.33px;color:#000;left:105px;">19/02/2024</div>
<div class="t c" style="top:508.0px;height:17px;line-height:17px;font-size:13.33px;color:#000;right:1716px;">2</div>
<div class="t c" style="top:508.0px;height:17px;line-height:17px;font-size:13.33px;color:#000;right:1676px;">2</div>
<div class="t c" style="top:508.0px;height:17px;line-height:17px;font-size:13.33px;color:#000;right:1552px;">115,68</div>
<div class="t c" style="top:508.0px;height:17px;line-height:17px;font-size:13.33px;color:#000;right:1495px;">20,00</div>
<div class="t c" style="top:508.0px;height:17px;line-height:17px;font-size:13.33px;color:#000;right:1323.5px;">95,68 €</div>
<div class="t c" style="top:508.0px;height:17px;line-height:17px;font-size:13.33px;color:#000;right:1240px;">1</div>
<div class="t c" style="top:508.0px;height:17px;line-height:17px;font-size:13.33px;color:#000;right:1160px;">4</div>
<div class="t c" style="top:508.0px;height:17px;line-height:17px;font-size:13.33px;color:#000;right:1083.5px;">47,84 €</div>
<div class="t c" style="top:525.0px;height:17px;line-height:17px;font-size:13.33px;color:#000;left:28px;letter-spacing:-0.3px;">airbnb</div>
<div class="t c" style="top:525.0px;height:17px;line-height:17px;font-size:13.33px;color:#000;left:105px;">26/02/2024</div>
<div class="t c" style="top:525.0px;height:17px;line-height:17px;font-size:13.33px;color:#000;right:1716px;">4</div>
<div class="t c" style="top:525.0px;height:17px;line-height:17px;font-size:13.33px;color:#000;right:1676px;">2</div>
<div class="t c" style="top:525.0px;height:17px;line-height:17px;font-size:13.33px;color:#000;right:1552px;">212,08</div>
<div class="t c" style="top:525.0px;height:17px;line-height:17px;font-size:13.33px;color:#000;right:1495px;">20,00</div>
<div class="t c" style="top:525.0px;height:17px;line-height:17px;font-size:13.33px;color:#000;right:1323.5px;">192,08 €</div>
<div class="t c" style="top:525.0px;height:17px;line-height:17px;font-size:13.33px;color:#000;right:1240px;">1</div>
<div class="t c" style="top:525.0px;height:17px;line-height:17px;font-size:13.33px;color:#000;right:1160px;">8</div>
<div class="t c" style="top:525.0px;height:17px;line-height:17px;font-size:13.33px;color:#000;right:1083.5px;">48,02 €</div>
<div class="t c" style="top:542.0px;height:17px;line-height:17px;font-size:13.33px;color:#000;left:28px;letter-spacing:-0.3px;">airbnb</div>
<div class="t c" style="top:542.0px;height:17px;line-height:17px;font-size:13.33px;color:#000;left:105px;">06/03/2024</div>
<div class="t c" style="top:542.0px;height:17px;line-height:17px;font-size:13.33px;color:#000;right:1716px;">1</div>
<div class="t c" style="top:542.0px;height:17px;line-height:17px;font-size:13.33px;color:#000;right:1676px;">2</div>
<div class="t c" style="top:542.0px;height:17px;line-height:17px;font-size:13.33px;color:#000;right:1552px;">67,48</div>
<div class="t c" style="top:542.0px;height:17px;line-height:17px;font-size:13.33px;color:#000;right:1495px;">20,00</div>
<div class="t c" style="top:542.0px;height:17px;line-height:17px;font-size:13.33px;color:#000;right:1323.5px;">47,48 €</div>
<div class="t c" style="top:542.0px;height:17px;line-height:17px;font-size:13.33px;color:#000;right:1240px;">1</div>
<div class="t c" style="top:542.0px;height:17px;line-height:17px;font-size:13.33px;color:#000;right:1160px;">2</div>
<div class="t c" style="top:542.0px;height:17px;line-height:17px;font-size:13.33px;color:#000;right:1083.5px;">47,48 €</div>
<div class="t c" style="top:559.0px;height:17px;line-height:17px;font-size:13.33px;color:#000;left:28px;letter-spacing:-0.3px;">booking</div>
<div class="t c" style="top:559.0px;height:17px;line-height:17px;font-size:13.33px;color:#000;left:105px;">11/03/2024</div>
<div class="t c" style="top:559.0px;height:17px;line-height:17px;font-size:13.33px;color:#000;right:1716px;">2</div>
<div class="t c" style="top:559.0px;height:17px;line-height:17px;font-size:13.33px;color:#000;right:1676px;">1</div>
<div class="t c" style="top:559.0px;height:17px;line-height:17px;font-size:13.33px;color:#000;right:1619px;">5,46</div>
<div class="t c" style="top:559.0px;height:17px;line-height:17px;font-size:13.33px;color:#000;right:1552px;">131,31</div>
<div class="t c" style="top:559.0px;height:17px;line-height:17px;font-size:13.33px;color:#000;right:1495px;">20,00</div>
<div style="left:430px;top:560px;width:65px;height:13px;background:#0a84e8;"></div>
<div class="t c" style="top:559.0px;height:17px;line-height:17px;font-size:13.33px;color:#000;right:1403.5px;">2,73 €</div>
<div class="t c" style="top:559.0px;height:17px;line-height:17px;font-size:13.33px;color:#000;right:1323.5px;">111,31 €</div>
<div class="t c" style="top:559.0px;height:17px;line-height:17px;font-size:13.33px;color:#000;right:1240px;">1</div>
<div class="t c" style="top:559.0px;height:17px;line-height:17px;font-size:13.33px;color:#000;right:1160px;">2</div>
<div class="t c" style="top:559.0px;height:17px;line-height:17px;font-size:13.33px;color:#000;right:1083.5px;">55,66 €</div>
<div class="t c" style="top:576.0px;height:17px;line-height:17px;font-size:13.33px;color:#000;left:28px;letter-spacing:-0.3px;">booking</div>
<div class="t c" style="top:576.0px;height:17px;line-height:17px;font-size:13.33px;color:#000;left:105px;">13/03/2024</div>
<div class="t c" style="top:576.0px;height:17px;line-height:17px;font-size:13.33px;color:#000;right:1716px;">1</div>
<div class="t c" style="top:576.0px;height:17px;line-height:17px;font-size:13.33px;color:#000;right:1676px;">2</div>
<div class="t c" style="top:576.0px;height:17px;line-height:17px;font-size:13.33px;color:#000;right:1619px;">2,73</div>
<div class="t c" style="top:576.0px;height:17px;line-height:17px;font-size:13.33px;color:#000;right:1552px;">74,05</div>
<div class="t c" style="top:576.0px;height:17px;line-height:17px;font-size:13.33px;color:#000;right:1495px;">20,00</div>
<div style="left:430px;top:577px;width:33px;height:13px;background:#0a84e8;"></div>
<div class="t c" style="top:576.0px;height:17px;line-height:17px;font-size:13.33px;color:#000;right:1403.5px;">1,37 €</div>
<div class="t c" style="top:576.0px;height:17px;line-height:17px;font-size:13.33px;color:#000;right:1323.5px;">54,05 €</div>
<div class="t c" style="top:576.0px;height:17px;line-height:17px;font-size:13.33px;color:#000;right:1240px;">1</div>
<div class="t c" style="top:576.0px;height:17px;line-height:17px;font-size:13.33px;color:#000;right:1160px;">2</div>
<div class="t c" style="top:576.0px;height:17px;line-height:17px;font-size:13.33px;color:#000;right:1083.5px;">54,05 €</div>
<div class="t c" style="top:593.0px;height:17px;line-height:17px;font-size:13.33px;color:#000;left:28px;letter-spacing:-0.3px;">airbnb</div>
<div class="t c" style="top:593.0px;height:17px;line-height:17px;font-size:13.33px;color:#000;left:105px;">15/03/2024</div>
<div class="t c" style="top:593.0px;height:17px;line-height:17px;font-size:13.33px;color:#000;right:1716px;">3</div>
<div class="t c" style="top:593.0px;height:17px;line-height:17px;font-size:13.33px;color:#000;right:1676px;">2</div>
<div class="t c" style="top:593.0px;height:17px;line-height:17px;font-size:13.33px;color:#000;right:1552px;">250,64</div>
<div class="t c" style="top:593.0px;height:17px;line-height:17px;font-size:13.33px;color:#000;right:1495px;">20,00</div>
<div class="t c" style="top:593.0px;height:17px;line-height:17px;font-size:13.33px;color:#000;right:1323.5px;">230,64 €</div>
<div class="t c" style="top:593.0px;height:17px;line-height:17px;font-size:13.33px;color:#000;right:1240px;">1</div>
<div class="t c" style="top:593.0px;height:17px;line-height:17px;font-size:13.33px;color:#000;right:1160px;">6</div>
<div class="t c" style="top:593.0px;height:17px;line-height:17px;font-size:13.33px;color:#000;right:1083.5px;">76,88 €</div>
<div class="t c" style="top:610.0px;height:17px;line-height:17px;font-size:13.33px;color:#000;left:28px;letter-spacing:-0.3px;">booking</div>
<div class="t c" style="top:610.0px;height:17px;line-height:17px;font-size:13.33px;color:#000;left:105px;">19/03/2024</div>
<div class="t c" style="top:610.0px;height:17px;line-height:17px;font-size:13.33px;color:#000;right:1716px;">1</div>
<div class="t c" style="top:610.0px;height:17px;line-height:17px;font-size:13.33px;color:#000;right:1676px;">1</div>
<div class="t c" style="top:610.0px;height:17px;line-height:17px;font-size:13.33px;color:#000;right:1619px;">2,73</div>
<div class="t c" style="top:610.0px;height:17px;line-height:17px;font-size:13.33px;color:#000;right:1552px;">74,05</div>
<div class="t c" style="top:610.0px;height:17px;line-height:17px;font-size:13.33px;color:#000;right:1495px;">20,00</div>
<div style="left:430px;top:611px;width:65px;height:13px;background:#0a84e8;"></div>
<div class="t c" style="top:610.0px;height:17px;line-height:17px;font-size:13.33px;color:#000;right:1403.5px;">2,73 €</div>
<div class="t c" style="top:610.0px;height:17px;line-height:17px;font-size:13.33px;color:#000;right:1323.5px;">54,05 €</div>
<div class="t c" style="top:610.0px;height:17px;line-height:17px;font-size:13.33px;color:#000;right:1240px;">1</div>
<div class="t c" style="top:610.0px;height:17px;line-height:17px;font-size:13.33px;color:#000;right:1160px;">1</div>
<div class="t c" style="top:610.0px;height:17px;line-height:17px;font-size:13.33px;color:#000;right:1083.5px;">54,05 €</div>
<div class="t c" style="top:627.0px;height:17px;line-height:17px;font-size:13.33px;color:#000;left:28px;letter-spacing:-0.3px;">booking</div>
<div class="t c" style="top:627.0px;height:17px;line-height:17px;font-size:13.33px;color:#000;left:105px;">25/03/2024</div>
<div class="t c" style="top:627.0px;height:17px;line-height:17px;font-size:13.33px;color:#000;right:1716px;">2</div>
<div class="t c" style="top:627.0px;height:17px;line-height:17px;font-size:13.33px;color:#000;right:1676px;">1</div>
<div class="t c" style="top:627.0px;height:17px;line-height:17px;font-size:13.33px;color:#000;right:1619px;">5,46</div>
<div class="t c" style="top:627.0px;height:17px;line-height:17px;font-size:13.33px;color:#000;right:1552px;">131,31</div>
<div class="t c" style="top:627.0px;height:17px;line-height:17px;font-size:13.33px;color:#000;right:1495px;">20,00</div>
<div style="left:430px;top:628px;width:65px;height:13px;background:#0a84e8;"></div>
<div class="t c" style="top:627.0px;height:17px;line-height:17px;font-size:13.33px;color:#000;right:1403.5px;">2,73 €</div>
<div class="t c" style="top:627.0px;height:17px;line-height:17px;font-size:13.33px;color:#000;right:1323.5px;">111,31 €</div>
<div class="t c" style="top:627.0px;height:17px;line-height:17px;font-size:13.33px;color:#000;right:1240px;">1</div>
<div class="t c" style="top:627.0px;height:17px;line-height:17px;font-size:13.33px;color:#000;right:1160px;">2</div>
<div class="t c" style="top:627.0px;height:17px;line-height:17px;font-size:13.33px;color:#000;right:1083.5px;">55,66 €</div>
<div class="t c" style="top:644.0px;height:17px;line-height:17px;font-size:13.33px;color:#000;left:28px;letter-spacing:-0.3px;">booking</div>
<div class="t c" style="top:644.0px;height:17px;line-height:17px;font-size:13.33px;color:#000;left:105px;">28/03/2024</div>
<div class="t c" style="top:644.0px;height:17px;line-height:17px;font-size:13.33px;color:#000;right:1716px;">1</div>
<div class="t c" style="top:644.0px;height:17px;line-height:17px;font-size:13.33px;color:#000;right:1676px;">2</div>
<div class="t c" style="top:644.0px;height:17px;line-height:17px;font-size:13.33px;color:#000;right:1619px;">2,73</div>
<div class="t c" style="top:644.0px;height:17px;line-height:17px;font-size:13.33px;color:#000;right:1552px;">54,05</div>
<div class="t c" style="top:644.0px;height:17px;line-height:17px;font-size:13.33px;color:#000;right:1495px;">20,00</div>
<div style="left:430px;top:645px;width:33px;height:13px;background:#0a84e8;"></div>
<div class="t c" style="top:644.0px;height:17px;line-height:17px;font-size:13.33px;color:#000;right:1403.5px;">1,37 €</div>
<div class="t c" style="top:644.0px;height:17px;line-height:17px;font-size:13.33px;color:#000;right:1320px;">74,05</div>
<svg style="left:524px;top:644px;" width="6" height="6" viewBox="0 0 6 6" fill="none"><path d="M0 0 H6 L0 6 Z" fill="#0e7d1c"/></svg>
<div class="t c" style="top:644.0px;height:17px;line-height:17px;font-size:13.33px;color:#000;right:1240px;">1</div>
<div class="t c" style="top:644.0px;height:17px;line-height:17px;font-size:13.33px;color:#000;right:1160px;">2</div>
<div class="t c" style="top:644.0px;height:17px;line-height:17px;font-size:13.33px;color:#000;right:1083.5px;">74,05 €</div>
<div class="t c" style="top:661.0px;height:17px;line-height:17px;font-size:13.33px;color:#000;left:28px;letter-spacing:-0.3px;">airbnb</div>
<div class="t c" style="top:661.0px;height:17px;line-height:17px;font-size:13.33px;color:#000;left:105px;">31/03/2024</div>
<div class="t c" style="top:661.0px;height:17px;line-height:17px;font-size:13.33px;color:#000;right:1716px;">1</div>
<div class="t c" style="top:661.0px;height:17px;line-height:17px;font-size:13.33px;color:#000;right:1676px;">2</div>
<div class="t c" style="top:661.0px;height:17px;line-height:17px;font-size:13.33px;color:#000;right:1552px;">9,64</div>
<div class="t c" style="top:661.0px;height:17px;line-height:17px;font-size:13.33px;color:#000;right:1495px;">0,00</div>
<div class="t c" style="top:661.0px;height:17px;line-height:17px;font-size:13.33px;color:#000;right:1320px;">9,64</div>
<svg style="left:524px;top:661px;" width="6" height="6" viewBox="0 0 6 6" fill="none"><path d="M0 0 H6 L0 6 Z" fill="#0e7d1c"/></svg>
<div class="t c" style="top:661.0px;height:17px;line-height:17px;font-size:13.33px;color:#000;right:1240px;">1</div>
<div class="t c" style="top:661.0px;height:17px;line-height:17px;font-size:13.33px;color:#000;right:1160px;">2</div>
<div class="t c" style="top:661.0px;height:17px;line-height:17px;font-size:13.33px;color:#000;right:1083.5px;">9,64 €</div>
<div class="t c" style="top:678.0px;height:17px;line-height:17px;font-size:13.33px;color:#000;left:28px;letter-spacing:-0.3px;">airbnb</div>
<div class="t c" style="top:678.0px;height:17px;line-height:17px;font-size:13.33px;color:#000;left:105px;">02/04/2024</div>
<div class="t c" style="top:678.0px;height:17px;line-height:17px;font-size:13.33px;color:#000;right:1716px;">3</div>
<div class="t c" style="top:678.0px;height:17px;line-height:17px;font-size:13.33px;color:#000;right:1676px;">2</div>
<div class="t c" style="top:678.0px;height:17px;line-height:17px;font-size:13.33px;color:#000;right:1552px;">143,88</div>
<div class="t c" style="top:678.0px;height:17px;line-height:17px;font-size:13.33px;color:#000;right:1495px;">20,00</div>
<div class="t c" style="top:678.0px;height:17px;line-height:17px;font-size:13.33px;color:#000;right:1320px;">163,88</div>
<svg style="left:524px;top:678px;" width="6" height="6" viewBox="0 0 6 6" fill="none"><path d="M0 0 H6 L0 6 Z" fill="#0e7d1c"/></svg>
<div class="t c" style="top:678.0px;height:17px;line-height:17px;font-size:13.33px;color:#000;right:1240px;">1</div>
<div class="t c" style="top:678.0px;height:17px;line-height:17px;font-size:13.33px;color:#000;right:1160px;">6</div>
<div class="t c" style="top:678.0px;height:17px;line-height:17px;font-size:13.33px;color:#000;right:1083.5px;">54,63 €</div>
<div class="t c" style="top:695.0px;height:17px;line-height:17px;font-size:13.33px;color:#000;left:28px;letter-spacing:-0.3px;">booking</div>
<div class="t c" style="top:695.0px;height:17px;line-height:17px;font-size:13.33px;color:#000;left:105px;">08/04/2024</div>
<div class="t c" style="top:695.0px;height:17px;line-height:17px;font-size:13.33px;color:#000;right:1716px;">2</div>
<div class="t c" style="top:695.0px;height:17px;line-height:17px;font-size:13.33px;color:#000;right:1676px;">1</div>
<div class="t c" style="top:695.0px;height:17px;line-height:17px;font-size:13.33px;color:#000;right:1619px;">5,46</div>
<div class="t c" style="top:695.0px;height:17px;line-height:17px;font-size:13.33px;color:#000;right:1552px;">111,31</div>
<div class="t c" style="top:695.0px;height:17px;line-height:17px;font-size:13.33px;color:#000;right:1495px;">20,00</div>
<div style="left:430px;top:696px;width:65px;height:13px;background:#0a84e8;"></div>
<div class="t c" style="top:695.0px;height:17px;line-height:17px;font-size:13.33px;color:#000;right:1403.5px;">2,73 €</div>
<div class="t c" style="top:695.0px;height:17px;line-height:17px;font-size:13.33px;color:#000;right:1320px;">131,31</div>
<svg style="left:524px;top:695px;" width="6" height="6" viewBox="0 0 6 6" fill="none"><path d="M0 0 H6 L0 6 Z" fill="#0e7d1c"/></svg>
<div class="t c" style="top:695.0px;height:17px;line-height:17px;font-size:13.33px;color:#000;right:1240px;">1</div>
<div class="t c" style="top:695.0px;height:17px;line-height:17px;font-size:13.33px;color:#000;right:1160px;">2</div>
<div class="t c" style="top:695.0px;height:17px;line-height:17px;font-size:13.33px;color:#000;right:1083.5px;">65,66 €</div>
<div class="t c" style="top:712.0px;height:17px;line-height:17px;font-size:13.33px;color:#000;left:28px;letter-spacing:-0.3px;">booking</div>
<div class="t c" style="top:712.0px;height:17px;line-height:17px;font-size:13.33px;color:#000;left:105px;">15/04/2024</div>
<div class="t c" style="top:712.0px;height:17px;line-height:17px;font-size:13.33px;color:#000;right:1716px;">2</div>
<div class="t c" style="top:712.0px;height:17px;line-height:17px;font-size:13.33px;color:#000;right:1676px;">3</div>
<div class="t c" style="top:712.0px;height:17px;line-height:17px;font-size:13.33px;color:#000;right:1619px;">6,28</div>
<div class="t c" style="top:712.0px;height:17px;line-height:17px;font-size:13.33px;color:#000;right:1552px;">126,42</div>
<div class="t c" style="top:712.0px;height:17px;line-height:17px;font-size:13.33px;color:#000;right:1495px;">20,00</div>
<div style="left:430px;top:713px;width:25px;height:13px;background:#0a84e8;"></div>
<div class="t c" style="top:712.0px;height:17px;line-height:17px;font-size:13.33px;color:#000;right:1403.5px;">1,05 €</div>
<div class="t c" style="top:712.0px;height:17px;line-height:17px;font-size:13.33px;color:#000;right:1320px;">146,42</div>
<svg style="left:524px;top:712px;" width="6" height="6" viewBox="0 0 6 6" fill="none"><path d="M0 0 H6 L0 6 Z" fill="#0e7d1c"/></svg>
<div class="t c" style="top:712.0px;height:17px;line-height:17px;font-size:13.33px;color:#000;right:1240px;">1</div>
<div class="t c" style="top:712.0px;height:17px;line-height:17px;font-size:13.33px;color:#000;right:1160px;">6</div>
<div class="t c" style="top:712.0px;height:17px;line-height:17px;font-size:13.33px;color:#000;right:1083.5px;">73,21 €</div>
<div class="t c" style="top:729.0px;height:17px;line-height:17px;font-size:13.33px;color:#000;left:28px;letter-spacing:-0.3px;">booking</div>
<div class="t c" style="top:729.0px;height:17px;line-height:17px;font-size:13.33px;color:#000;left:105px;">17/04/2024</div>
<div class="t c" style="top:729.0px;height:17px;line-height:17px;font-size:13.33px;color:#000;right:1716px;">3</div>
<div class="t c" style="top:729.0px;height:17px;line-height:17px;font-size:13.33px;color:#000;right:1676px;">4</div>
<div class="t c" style="top:729.0px;height:17px;line-height:17px;font-size:13.33px;color:#000;right:1619px;">11,19</div>
<div class="t c" style="top:729.0px;height:17px;line-height:17px;font-size:13.33px;color:#000;right:1552px;">231,48</div>
<div class="t c" style="top:729.0px;height:17px;line-height:17px;font-size:13.33px;color:#000;right:1495px;">20,00</div>
<div style="left:430px;top:730px;width:22px;height:13px;background:#0a84e8;"></div>
<div class="t c" style="top:729.0px;height:17px;line-height:17px;font-size:13.33px;color:#000;right:1403.5px;">0,93 €</div>
<div class="t c" style="top:729.0px;height:17px;line-height:17px;font-size:13.33px;color:#000;right:1320px;">251,48</div>
<svg style="left:524px;top:729px;" width="6" height="6" viewBox="0 0 6 6" fill="none"><path d="M0 0 H6 L0 6 Z" fill="#0e7d1c"/></svg>
<div class="t c" style="top:729.0px;height:17px;line-height:17px;font-size:13.33px;color:#000;right:1240px;">1</div>
<div class="t c" style="top:729.0px;height:17px;line-height:17px;font-size:13.33px;color:#000;right:1160px;">12</div>
<div class="t c" style="top:729.0px;height:17px;line-height:17px;font-size:13.33px;color:#000;right:1083.5px;">83,83 €</div>
<div class="t c" style="top:746.0px;height:17px;line-height:17px;font-size:13.33px;color:#000;left:28px;letter-spacing:-0.3px;">booking</div>
<div class="t c" style="top:746.0px;height:17px;line-height:17px;font-size:13.33px;color:#000;left:105px;">20/04/2024</div>
<div class="t c" style="top:746.0px;height:17px;line-height:17px;font-size:13.33px;color:#000;right:1716px;">4</div>
<div class="t c" style="top:746.0px;height:17px;line-height:17px;font-size:13.33px;color:#000;right:1676px;">2</div>
<div class="t c" style="top:746.0px;height:17px;line-height:17px;font-size:13.33px;color:#000;right:1619px;">13,19</div>
<div class="t c" style="top:746.0px;height:17px;line-height:17px;font-size:13.33px;color:#000;right:1552px;">273,42</div>
<div class="t c" style="top:746.0px;height:17px;line-height:17px;font-size:13.33px;color:#000;right:1495px;">20,00</div>
<div style="left:430px;top:747px;width:39px;height:13px;background:#0a84e8;"></div>
<div class="t c" style="top:746.0px;height:17px;line-height:17px;font-size:13.33px;color:#000;right:1403.5px;">1,65 €</div>
<div class="t c" style="top:746.0px;height:17px;line-height:17px;font-size:13.33px;color:#000;right:1320px;">293,42</div>
<svg style="left:524px;top:746px;" width="6" height="6" viewBox="0 0 6 6" fill="none"><path d="M0 0 H6 L0 6 Z" fill="#0e7d1c"/></svg>
<div class="t c" style="top:746.0px;height:17px;line-height:17px;font-size:13.33px;color:#000;right:1240px;">1</div>
<div class="t c" style="top:746.0px;height:17px;line-height:17px;font-size:13.33px;color:#000;right:1160px;">8</div>
<div class="t c" style="top:746.0px;height:17px;line-height:17px;font-size:13.33px;color:#000;right:1083.5px;">73,36 €</div>
<div class="t c" style="top:763.0px;height:17px;line-height:17px;font-size:13.33px;color:#000;left:28px;letter-spacing:-0.3px;">booking</div>
<div class="t c" style="top:763.0px;height:17px;line-height:17px;font-size:13.33px;color:#000;left:105px;">26/04/2024</div>
<div class="t c" style="top:763.0px;height:17px;line-height:17px;font-size:13.33px;color:#000;right:1716px;">1</div>
<div class="t c" style="top:763.0px;height:17px;line-height:17px;font-size:13.33px;color:#000;right:1676px;">4</div>
<div class="t c" style="top:763.0px;height:17px;line-height:17px;font-size:13.33px;color:#000;right:1619px;">4,64</div>
<div class="t c" style="top:763.0px;height:17px;line-height:17px;font-size:13.33px;color:#000;right:1552px;">94,05</div>
<div class="t c" style="top:763.0px;height:17px;line-height:17px;font-size:13.33px;color:#000;right:1495px;">20,00</div>
<div style="left:430px;top:764px;width:28px;height:13px;background:#0a84e8;"></div>
<div class="t c" style="top:763.0px;height:17px;line-height:17px;font-size:13.33px;color:#000;right:1403.5px;">1,16 €</div>
<div class="t c" style="top:763.0px;height:17px;line-height:17px;font-size:13.33px;color:#000;right:1320px;">114,05</div>
<svg style="left:524px;top:763px;" width="6" height="6" viewBox="0 0 6 6" fill="none"><path d="M0 0 H6 L0 6 Z" fill="#0e7d1c"/></svg>
<div class="t c" style="top:763.0px;height:17px;line-height:17px;font-size:13.33px;color:#000;right:1240px;">1</div>
<div class="t c" style="top:763.0px;height:17px;line-height:17px;font-size:13.33px;color:#000;right:1160px;">4</div>
<div class="t c" style="top:763.0px;height:17px;line-height:17px;font-size:13.33px;color:#000;right:1083.5px;">114,05 €</div>
<div class="t c" style="top:780.0px;height:17px;line-height:17px;font-size:13.33px;color:#000;left:28px;letter-spacing:-0.3px;">booking</div>
<div class="t c" style="top:780.0px;height:17px;line-height:17px;font-size:13.33px;color:#000;left:105px;">30/04/2024</div>
<div class="t c" style="top:780.0px;height:17px;line-height:17px;font-size:13.33px;color:#000;right:1716px;">1</div>
<div class="t c" style="top:780.0px;height:17px;line-height:17px;font-size:13.33px;color:#000;right:1676px;">2</div>
<div class="t c" style="top:780.0px;height:17px;line-height:17px;font-size:13.33px;color:#000;right:1619px;">2,73</div>
<div class="t c" style="top:780.0px;height:17px;line-height:17px;font-size:13.33px;color:#000;right:1552px;">54,05</div>
<div class="t c" style="top:780.0px;height:17px;line-height:17px;font-size:13.33px;color:#000;right:1495px;">20,00</div>
<div style="left:430px;top:781px;width:33px;height:13px;background:#0a84e8;"></div>
<div class="t c" style="top:780.0px;height:17px;line-height:17px;font-size:13.33px;color:#000;right:1403.5px;">1,37 €</div>
<div class="t c" style="top:780.0px;height:17px;line-height:17px;font-size:13.33px;color:#000;right:1320px;">74,05</div>
<svg style="left:524px;top:780px;" width="6" height="6" viewBox="0 0 6 6" fill="none"><path d="M0 0 H6 L0 6 Z" fill="#0e7d1c"/></svg>
<div class="t c" style="top:780.0px;height:17px;line-height:17px;font-size:13.33px;color:#000;right:1240px;">1</div>
<div class="t c" style="top:780.0px;height:17px;line-height:17px;font-size:13.33px;color:#000;right:1160px;">2</div>
<div class="t c" style="top:780.0px;height:17px;line-height:17px;font-size:13.33px;color:#000;right:1083.5px;">74,05 €</div>
<div class="t c" style="top:797.0px;height:17px;line-height:17px;font-size:13.33px;color:#000;left:28px;letter-spacing:-0.3px;">booking</div>
<div class="t c" style="top:797.0px;height:17px;line-height:17px;font-size:13.33px;color:#000;left:105px;">01/05/2024</div>
<div class="t c" style="top:797.0px;height:17px;line-height:17px;font-size:13.33px;color:#000;right:1716px;">1</div>
<div class="t c" style="top:797.0px;height:17px;line-height:17px;font-size:13.33px;color:#000;right:1676px;">4</div>
<div class="t c" style="top:797.0px;height:17px;line-height:17px;font-size:13.33px;color:#000;right:1619px;">3,28</div>
<div class="t c" style="top:797.0px;height:17px;line-height:17px;font-size:13.33px;color:#000;right:1552px;">65,50</div>
<div class="t c" style="top:797.0px;height:17px;line-height:17px;font-size:13.33px;color:#000;right:1495px;">20,00</div>
<div style="left:430px;top:798px;width:20px;height:13px;background:#0a84e8;"></div>
<div class="t c" style="top:797.0px;height:17px;line-height:17px;font-size:13.33px;color:#000;right:1403.5px;">0,82 €</div>
<div class="t c" style="top:797.0px;height:17px;line-height:17px;font-size:13.33px;color:#000;right:1320px;">85,5</div>
<svg style="left:524px;top:797px;" width="6" height="6" viewBox="0 0 6 6" fill="none"><path d="M0 0 H6 L0 6 Z" fill="#0e7d1c"/></svg>
<div class="t c" style="top:797.0px;height:17px;line-height:17px;font-size:13.33px;color:#000;right:1240px;">1</div>
<div class="t c" style="top:797.0px;height:17px;line-height:17px;font-size:13.33px;color:#000;right:1160px;">4</div>
<div class="t c" style="top:797.0px;height:17px;line-height:17px;font-size:13.33px;color:#000;right:1083.5px;">85,50 €</div>
<div class="t c" style="top:814.0px;height:17px;line-height:17px;font-size:13.33px;color:#000;left:28px;letter-spacing:-0.3px;">booking</div>
<div class="t c" style="top:814.0px;height:17px;line-height:17px;font-size:13.33px;color:#000;left:105px;">06/05/2024</div>
<div class="t c" style="top:814.0px;height:17px;line-height:17px;font-size:13.33px;color:#000;right:1716px;">6</div>
<div class="t c" style="top:814.0px;height:17px;line-height:17px;font-size:13.33px;color:#000;right:1676px;">2</div>
<div class="t c" style="top:814.0px;height:17px;line-height:17px;font-size:13.33px;color:#000;right:1619px;">18,65</div>
<div class="t c" style="top:814.0px;height:17px;line-height:17px;font-size:13.33px;color:#000;right:1552px;">387,95</div>
<div class="t c" style="top:814.0px;height:17px;line-height:17px;font-size:13.33px;color:#000;right:1495px;">20,00</div>
<div style="left:430px;top:815px;width:37px;height:13px;background:#0a84e8;"></div>
<div class="t c" style="top:814.0px;height:17px;line-height:17px;font-size:13.33px;color:#000;right:1403.5px;">1,55 €</div>
<div class="t c" style="top:814.0px;height:17px;line-height:17px;font-size:13.33px;color:#000;right:1320px;">407,95</div>
<svg style="left:524px;top:814px;" width="6" height="6" viewBox="0 0 6 6" fill="none"><path d="M0 0 H6 L0 6 Z" fill="#0e7d1c"/></svg>
<div class="t c" style="top:814.0px;height:17px;line-height:17px;font-size:13.33px;color:#000;right:1240px;">1</div>
<div class="t c" style="top:814.0px;height:17px;line-height:17px;font-size:13.33px;color:#000;right:1160px;">12</div>
<div class="t c" style="top:814.0px;height:17px;line-height:17px;font-size:13.33px;color:#000;right:1083.5px;">67,99 €</div>
<div class="t c" style="top:831.0px;height:17px;line-height:17px;font-size:13.33px;color:#000;left:28px;letter-spacing:-0.3px;">airbnb</div>
<div class="t c" style="top:831.0px;height:17px;line-height:17px;font-size:13.33px;color:#000;left:105px;">13/05/2024</div>
<div class="t c" style="top:831.0px;height:17px;line-height:17px;font-size:13.33px;color:#000;right:1716px;">3</div>
<div class="t c" style="top:831.0px;height:17px;line-height:17px;font-size:13.33px;color:#000;right:1676px;">1</div>
<div class="t c" style="top:831.0px;height:17px;line-height:17px;font-size:13.33px;color:#000;right:1552px;">143,88</div>
<div class="t c" style="top:831.0px;height:17px;line-height:17px;font-size:13.33px;color:#000;right:1495px;">20,00</div>
<div class="t c" style="top:831.0px;height:17px;line-height:17px;font-size:13.33px;color:#000;right:1320px;">163,88</div>
<svg style="left:524px;top:831px;" width="6" height="6" viewBox="0 0 6 6" fill="none"><path d="M0 0 H6 L0 6 Z" fill="#0e7d1c"/></svg>
<div class="t c" style="top:831.0px;height:17px;line-height:17px;font-size:13.33px;color:#000;right:1240px;">1</div>
<div class="t c" style="top:831.0px;height:17px;line-height:17px;font-size:13.33px;color:#000;right:1160px;">3</div>
<div class="t c" style="top:831.0px;height:17px;line-height:17px;font-size:13.33px;color:#000;right:1083.5px;">54,63 €</div>
<div class="t c" style="top:848.0px;height:17px;line-height:17px;font-size:13.33px;color:#000;left:28px;letter-spacing:-0.3px;">booking</div>
<div class="t c" style="top:848.0px;height:17px;line-height:17px;font-size:13.33px;color:#000;left:105px;">18/05/2024</div>
<div class="t c" style="top:848.0px;height:17px;line-height:17px;font-size:13.33px;color:#000;right:1716px;">1</div>
<div class="t c" style="top:848.0px;height:17px;line-height:17px;font-size:13.33px;color:#000;right:1676px;">2</div>
<div class="t c" style="top:848.0px;height:17px;line-height:17px;font-size:13.33px;color:#000;right:1619px;">3,86</div>
<div class="t c" style="top:848.0px;height:17px;line-height:17px;font-size:13.33px;color:#000;right:1552px;">77,83</div>
<div class="t c" style="top:848.0px;height:17px;line-height:17px;font-size:13.33px;color:#000;right:1495px;">20,00</div>
<div style="left:430px;top:849px;width:46px;height:13px;background:#0a84e8;"></div>
<div class="t c" style="top:848.0px;height:17px;line-height:17px;font-size:13.33px;color:#000;right:1403.5px;">1,93 €</div>
<div class="t c" style="top:848.0px;height:17px;line-height:17px;font-size:13.33px;color:#000;right:1320px;">97,83</div>
<svg style="left:524px;top:848px;" width="6" height="6" viewBox="0 0 6 6" fill="none"><path d="M0 0 H6 L0 6 Z" fill="#0e7d1c"/></svg>
<div class="t c" style="top:848.0px;height:17px;line-height:17px;font-size:13.33px;color:#000;right:1240px;">1</div>
<div class="t c" style="top:848.0px;height:17px;line-height:17px;font-size:13.33px;color:#000;right:1160px;">2</div>
<div class="t c" style="top:848.0px;height:17px;line-height:17px;font-size:13.33px;color:#000;right:1083.5px;">97,83 €</div>
<div class="t c" style="top:865.0px;height:17px;line-height:17px;font-size:13.33px;color:#000;left:28px;letter-spacing:-0.3px;">booking</div>
<div class="t c" style="top:865.0px;height:17px;line-height:17px;font-size:13.33px;color:#000;left:105px;">19/05/2024</div>
<div class="t c" style="top:865.0px;height:17px;line-height:17px;font-size:13.33px;color:#000;right:1716px;">6</div>
<div class="t c" style="top:865.0px;height:17px;line-height:17px;font-size:13.33px;color:#000;right:1676px;">2</div>
<div class="t c" style="top:865.0px;height:17px;line-height:17px;font-size:13.33px;color:#000;right:1619px;">19,78</div>
<div class="t c" style="top:865.0px;height:17px;line-height:17px;font-size:13.33px;color:#000;right:1552px;">411,73</div>
<div class="t c" style="top:865.0px;height:17px;line-height:17px;font-size:13.33px;color:#000;right:1495px;">20,00</div>
<div style="left:430px;top:866px;width:39px;height:13px;background:#0a84e8;"></div>
<div class="t c" style="top:865.0px;height:17px;line-height:17px;font-size:13.33px;color:#000;right:1403.5px;">1,65 €</div>
<div class="t c" style="top:865.0px;height:17px;line-height:17px;font-size:13.33px;color:#000;right:1320px;">431,73</div>
<svg style="left:524px;top:865px;" width="6" height="6" viewBox="0 0 6 6" fill="none"><path d="M0 0 H6 L0 6 Z" fill="#0e7d1c"/></svg>
<div class="t c" style="top:865.0px;height:17px;line-height:17px;font-size:13.33px;color:#000;right:1240px;">1</div>
<div class="t c" style="top:865.0px;height:17px;line-height:17px;font-size:13.33px;color:#000;right:1160px;">12</div>
<div class="t c" style="top:865.0px;height:17px;line-height:17px;font-size:13.33px;color:#000;right:1083.5px;">71,96 €</div>
<div class="t c" style="top:882.0px;height:17px;line-height:17px;font-size:13.33px;color:#000;left:28px;letter-spacing:-0.3px;">booking</div>
<div class="t c" style="top:882.0px;height:17px;line-height:17px;font-size:13.33px;color:#000;left:105px;">27/05/2024</div>
<div class="t c" style="top:882.0px;height:17px;line-height:17px;font-size:13.33px;color:#000;right:1716px;">1</div>
<div class="t c" style="top:882.0px;height:17px;line-height:17px;font-size:13.33px;color:#000;right:1676px;">2</div>
<div class="t c" style="top:882.0px;height:17px;line-height:17px;font-size:13.33px;color:#000;right:1619px;">2,73</div>
<div class="t c" style="top:882.0px;height:17px;line-height:17px;font-size:13.33px;color:#000;right:1552px;">54,05</div>
<div class="t c" style="top:882.0px;height:17px;line-height:17px;font-size:13.33px;color:#000;right:1495px;">20,00</div>
<div style="left:430px;top:883px;width:33px;height:13px;background:#0a84e8;"></div>
<div class="t c" style="top:882.0px;height:17px;line-height:17px;font-size:13.33px;color:#000;right:1403.5px;">1,37 €</div>
<div class="t c" style="top:882.0px;height:17px;line-height:17px;font-size:13.33px;color:#000;right:1320px;">74,05</div>
<svg style="left:524px;top:882px;" width="6" height="6" viewBox="0 0 6 6" fill="none"><path d="M0 0 H6 L0 6 Z" fill="#0e7d1c"/></svg>
<div class="t c" style="top:882.0px;height:17px;line-height:17px;font-size:13.33px;color:#000;right:1240px;">1</div>
<div class="t c" style="top:882.0px;height:17px;line-height:17px;font-size:13.33px;color:#000;right:1160px;">2</div>
<div class="t c" style="top:882.0px;height:17px;line-height:17px;font-size:13.33px;color:#000;right:1083.5px;">74,05 €</div>
<div class="t c" style="top:899.0px;height:17px;line-height:17px;font-size:13.33px;color:#000;left:28px;letter-spacing:-0.3px;">airbnb</div>
<div class="t c" style="top:899.0px;height:17px;line-height:17px;font-size:13.33px;color:#000;left:105px;">28/05/2024</div>
<div class="t c" style="top:899.0px;height:17px;line-height:17px;font-size:13.33px;color:#000;right:1716px;">3</div>
<div class="t c" style="top:899.0px;height:17px;line-height:17px;font-size:13.33px;color:#000;right:1676px;">1</div>
<div class="t c" style="top:899.0px;height:17px;line-height:17px;font-size:13.33px;color:#000;right:1552px;">143,88</div>
<div class="t c" style="top:899.0px;height:17px;line-height:17px;font-size:13.33px;color:#000;right:1495px;">20,00</div>
<div class="t c" style="top:899.0px;height:17px;line-height:17px;font-size:13.33px;color:#000;right:1320px;">163,88</div>
<svg style="left:524px;top:899px;" width="6" height="6" viewBox="0 0 6 6" fill="none"><path d="M0 0 H6 L0 6 Z" fill="#0e7d1c"/></svg>
<div class="t c" style="top:899.0px;height:17px;line-height:17px;font-size:13.33px;color:#000;right:1240px;">1</div>
<div class="t c" style="top:899.0px;height:17px;line-height:17px;font-size:13.33px;color:#000;right:1160px;">3</div>
<div class="t c" style="top:899.0px;height:17px;line-height:17px;font-size:13.33px;color:#000;right:1083.5px;">54,63 €</div>
<div class="t c" style="top:916.0px;height:17px;line-height:17px;font-size:13.33px;color:#000;left:28px;letter-spacing:-0.3px;">booking</div>
<div class="t c" style="top:916.0px;height:17px;line-height:17px;font-size:13.33px;color:#000;left:105px;">01/06/2024</div>
<div class="t c" style="top:916.0px;height:17px;line-height:17px;font-size:13.33px;color:#000;right:1716px;">1</div>
<div class="t c" style="top:916.0px;height:17px;line-height:17px;font-size:13.33px;color:#000;right:1676px;">3</div>
<div class="t c" style="top:916.0px;height:17px;line-height:17px;font-size:13.33px;color:#000;right:1619px;">4,44</div>
<div class="t c" style="top:916.0px;height:17px;line-height:17px;font-size:13.33px;color:#000;right:1552px;">88,52</div>
<div class="t c" style="top:916.0px;height:17px;line-height:17px;font-size:13.33px;color:#000;right:1495px;">20,00</div>
<div style="left:430px;top:917px;width:35px;height:13px;background:#0a84e8;"></div>
<div class="t c" style="top:916.0px;height:17px;line-height:17px;font-size:13.33px;color:#000;right:1403.5px;">1,48 €</div>
<div class="t c" style="top:916.0px;height:17px;line-height:17px;font-size:13.33px;color:#000;right:1320px;">108,52</div>
<svg style="left:524px;top:916px;" width="6" height="6" viewBox="0 0 6 6" fill="none"><path d="M0 0 H6 L0 6 Z" fill="#0e7d1c"/></svg>
<div class="t c" style="top:916.0px;height:17px;line-height:17px;font-size:13.33px;color:#000;right:1240px;">1</div>
<div class="t c" style="top:916.0px;height:17px;line-height:17px;font-size:13.33px;color:#000;right:1160px;">3</div>
<div class="t c" style="top:916.0px;height:17px;line-height:17px;font-size:13.33px;color:#000;right:1083.5px;">108,52 €</div>
<div class="t c" style="top:933.0px;height:17px;line-height:17px;font-size:13.33px;color:#000;left:28px;letter-spacing:-0.3px;">booking</div>
<div class="t c" style="top:933.0px;height:17px;line-height:17px;font-size:13.33px;color:#000;left:105px;">03/06/2024</div>
<div class="t c" style="top:933.0px;height:17px;line-height:17px;font-size:13.33px;color:#000;right:1716px;">4</div>
<div class="t c" style="top:933.0px;height:17px;line-height:17px;font-size:13.33px;color:#000;right:1676px;">4</div>
<div class="t c" style="top:933.0px;height:17px;line-height:17px;font-size:13.33px;color:#000;right:1619px;">13,1</div>
<div class="t c" style="top:933.0px;height:17px;line-height:17px;font-size:13.33px;color:#000;right:1552px;">271,65</div>
<div class="t c" style="top:933.0px;height:17px;line-height:17px;font-size:13.33px;color:#000;right:1495px;">20,00</div>
<div style="left:430px;top:934px;width:20px;height:13px;background:#0a84e8;"></div>
<div class="t c" style="top:933.0px;height:17px;line-height:17px;font-size:13.33px;color:#000;right:1403.5px;">0,82 €</div>
<div class="t c" style="top:933.0px;height:17px;line-height:17px;font-size:13.33px;color:#000;right:1320px;">291,65</div>
<svg style="left:524px;top:933px;" width="6" height="6" viewBox="0 0 6 6" fill="none"><path d="M0 0 H6 L0 6 Z" fill="#0e7d1c"/></svg>
<div class="t c" style="top:933.0px;height:17px;line-height:17px;font-size:13.33px;color:#000;right:1240px;">1</div>
<div class="t c" style="top:933.0px;height:17px;line-height:17px;font-size:13.33px;color:#000;right:1160px;">16</div>
<div class="t c" style="top:933.0px;height:17px;line-height:17px;font-size:13.33px;color:#000;right:1083.5px;">72,91 €</div>
<div class="t c" style="top:950.0px;height:17px;line-height:17px;font-size:13.33px;color:#000;left:28px;letter-spacing:-0.3px;">booking</div>
<div class="t c" style="top:950.0px;height:17px;line-height:17px;font-size:13.33px;color:#000;left:105px;">08/06/2024</div>
<div class="t c" style="top:950.0px;height:17px;line-height:17px;font-size:13.33px;color:#000;right:1716px;">1</div>
<div class="t c" style="top:950.0px;height:17px;line-height:17px;font-size:13.33px;color:#000;right:1676px;">2</div>
<div class="t c" style="top:950.0px;height:17px;line-height:17px;font-size:13.33px;color:#000;right:1619px;">3,86</div>
<div class="t c" style="top:950.0px;height:17px;line-height:17px;font-size:13.33px;color:#000;right:1552px;">77,83</div>
<div class="t c" style="top:950.0px;height:17px;line-height:17px;font-size:13.33px;color:#000;right:1495px;">20,00</div>
<div style="left:430px;top:951px;width:46px;height:13px;background:#0a84e8;"></div>
<div class="t c" style="top:950.0px;height:17px;line-height:17px;font-size:13.33px;color:#000;right:1403.5px;">1,93 €</div>
<div class="t c" style="top:950.0px;height:17px;line-height:17px;font-size:13.33px;color:#000;right:1320px;">97,83</div>
<svg style="left:524px;top:950px;" width="6" height="6" viewBox="0 0 6 6" fill="none"><path d="M0 0 H6 L0 6 Z" fill="#0e7d1c"/></svg>
<div class="t c" style="top:950.0px;height:17px;line-height:17px;font-size:13.33px;color:#000;right:1240px;">1</div>
<div class="t c" style="top:950.0px;height:17px;line-height:17px;font-size:13.33px;color:#000;right:1160px;">2</div>
<div class="t c" style="top:950.0px;height:17px;line-height:17px;font-size:13.33px;color:#000;right:1083.5px;">97,83 €</div>
<div class="t c" style="top:967.0px;height:17px;line-height:17px;font-size:13.33px;color:#000;left:28px;letter-spacing:-0.3px;">booking</div>
<div class="t c" style="top:967.0px;height:17px;line-height:17px;font-size:13.33px;color:#000;left:105px;">09/06/2024</div>
<div class="t c" style="top:967.0px;height:17px;line-height:17px;font-size:13.33px;color:#000;right:1716px;">1</div>
<div class="t c" style="top:967.0px;height:17px;line-height:17px;font-size:13.33px;color:#000;right:1676px;">4</div>
<div class="t c" style="top:967.0px;height:17px;line-height:17px;font-size:13.33px;color:#000;right:1619px;">4,64</div>
<div class="t c" style="top:967.0px;height:17px;line-height:17px;font-size:13.33px;color:#000;right:1552px;">94,05</div>
<div class="t c" style="top:967.0px;height:17px;line-height:17px;font-size:13.33px;color:#000;right:1495px;">20,00</div>
<div style="left:430px;top:968px;width:28px;height:13px;background:#0a84e8;"></div>
<div class="t c" style="top:967.0px;height:17px;line-height:17px;font-size:13.33px;color:#000;right:1403.5px;">1,16 €</div>
<div class="t c" style="top:967.0px;height:17px;line-height:17px;font-size:13.33px;color:#000;right:1320px;">114,05</div>
<svg style="left:524px;top:967px;" width="6" height="6" viewBox="0 0 6 6" fill="none"><path d="M0 0 H6 L0 6 Z" fill="#0e7d1c"/></svg>
<div class="t c" style="top:967.0px;height:17px;line-height:17px;font-size:13.33px;color:#000;right:1240px;">1</div>
<div class="t c" style="top:967.0px;height:17px;line-height:17px;font-size:13.33px;color:#000;right:1160px;">4</div>
<div class="t c" style="top:967.0px;height:17px;line-height:17px;font-size:13.33px;color:#000;right:1083.5px;">114,05 €</div>
<div style="left:25px;top:286px;width:819px;height:1px;background:#1f9bd1;"></div>
<div style="left:25px;top:336px;width:819px;height:1px;background:#1f9bd1;"></div>
<div style="left:25px;top:354px;width:819px;height:1px;background:#1f9bd1;"></div>
<div style="left:25px;top:371px;width:819px;height:1px;background:#1f9bd1;"></div>
<div style="left:25px;top:388px;width:819px;height:1px;background:#1f9bd1;"></div>
<div style="left:25px;top:405px;width:819px;height:1px;background:#1f9bd1;"></div>
<div style="left:25px;top:422px;width:819px;height:1px;background:#1f9bd1;"></div>
<div style="left:25px;top:439px;width:819px;height:1px;background:#1f9bd1;"></div>
<div style="left:25px;top:456px;width:819px;height:1px;background:#1f9bd1;"></div>
<div style="left:25px;top:473px;width:819px;height:1px;background:#1f9bd1;"></div>
<div style="left:25px;top:490px;width:819px;height:1px;background:#1f9bd1;"></div>
<div style="left:25px;top:507px;width:819px;height:1px;background:#1f9bd1;"></div>
<div style="left:25px;top:524px;width:819px;height:1px;background:#1f9bd1;"></div>
<div style="left:25px;top:541px;width:819px;height:1px;background:#1f9bd1;"></div>
<div style="left:25px;top:558px;width:819px;height:1px;background:#1f9bd1;"></div>
<div style="left:25px;top:575px;width:819px;height:1px;background:#1f9bd1;"></div>
<div style="left:25px;top:592px;width:819px;height:1px;background:#1f9bd1;"></div>
<div style="left:25px;top:609px;width:819px;height:1px;background:#1f9bd1;"></div>
<div style="left:25px;top:626px;width:819px;height:1px;background:#1f9bd1;"></div>
<div style="left:25px;top:643px;width:819px;height:1px;background:#1f9bd1;"></div>
<div style="left:25px;top:660px;width:819px;height:1px;background:#1f9bd1;"></div>
<div style="left:25px;top:677px;width:819px;height:1px;background:#1f9bd1;"></div>
<div style="left:25px;top:694px;width:819px;height:1px;background:#1f9bd1;"></div>
<div style="left:25px;top:711px;width:819px;height:1px;background:#1f9bd1;"></div>
<div style="left:25px;top:728px;width:819px;height:1px;background:#1f9bd1;"></div>
<div style="left:25px;top:745px;width:819px;height:1px;background:#1f9bd1;"></div>
<div style="left:25px;top:762px;width:819px;height:1px;background:#1f9bd1;"></div>
<div style="left:25px;top:779px;width:819px;height:1px;background:#1f9bd1;"></div>
<div style="left:25px;top:796px;width:819px;height:1px;background:#1f9bd1;"></div>
<div style="left:25px;top:813px;width:819px;height:1px;background:#1f9bd1;"></div>
<div style="left:25px;top:830px;width:819px;height:1px;background:#1f9bd1;"></div>
<div style="left:25px;top:847px;width:819px;height:1px;background:#1f9bd1;"></div>
<div style="left:25px;top:864px;width:819px;height:1px;background:#1f9bd1;"></div>
<div style="left:25px;top:881px;width:819px;height:1px;background:#1f9bd1;"></div>
<div style="left:25px;top:898px;width:819px;height:1px;background:#1f9bd1;"></div>
<div style="left:25px;top:915px;width:819px;height:1px;background:#1f9bd1;"></div>
<div style="left:25px;top:932px;width:819px;height:1px;background:#1f9bd1;"></div>
<div style="left:25px;top:949px;width:819px;height:1px;background:#1f9bd1;"></div>
<div style="left:25px;top:966px;width:819px;height:1px;background:#1f9bd1;"></div>
<div style="left:25px;top:983px;width:819px;height:1px;background:#1f9bd1;"></div>
<div style="left:102px;top:286px;width:1px;height:700px;background:#1f9bd1;"></div>
<div style="left:171px;top:286px;width:1px;height:700px;background:#1f9bd1;"></div>
<div style="left:207px;top:286px;width:1px;height:700px;background:#1f9bd1;"></div>
<div style="left:247px;top:286px;width:1px;height:700px;background:#1f9bd1;"></div>
<div style="left:304px;top:286px;width:1px;height:700px;background:#1f9bd1;"></div>
<div style="left:371px;top:286px;width:1px;height:700px;background:#1f9bd1;"></div>
<div style="left:428px;top:286px;width:1px;height:700px;background:#1f9bd1;"></div>
<div style="left:523px;top:286px;width:1px;height:700px;background:#1f9bd1;"></div>
<div style="left:603px;top:286px;width:1px;height:700px;background:#1f9bd1;"></div>
<div style="left:683px;top:286px;width:1px;height:700px;background:#1f9bd1;"></div>
<div style="left:763px;top:286px;width:1px;height:700px;background:#1f9bd1;"></div>
<div style="left:843px;top:286px;width:1px;height:700px;background:#1f9bd1;"></div>
<div style="left:25px;top:236px;width:1px;height:750px;background:#cfcfcf;"></div>
<div style="left:25px;top:286px;width:1px;height:51px;background:#1f9bd1;"></div>
<div style="left:430px;top:985px;width:65px;height:1px;background:#0a84e8;"></div>
<div style="left:0px;top:337px;width:1898px;height:1px;background:#8c8c8c;"></div>
<div style="left:24px;top:489px;width:1874px;height:2px;background:#1e6e42;"></div>
<div style="left:24px;top:507px;width:1874px;height:2px;background:#1e6e42;"></div>
<div style="left:24px;top:489px;width:2px;height:20px;background:#1e6e42;"></div>
<div style="left:26px;top:491px;width:1872px;height:1px;background:#fff;"></div>
<div style="left:26px;top:506px;width:1872px;height:1px;background:#fff;"></div>
<div style="left:26px;top:491px;width:1px;height:16px;background:#fff;"></div>
<div style="left:23px;top:505px;width:7px;height:6px;background:#fff;"></div>
<div style="left:24px;top:506px;width:5px;height:5px;background:#1e6e42;"></div>
<div style="left:1898px;top:219px;width:1px;height:767px;background:#dedede;"></div>
<div style="left:1899px;top:219px;width:21px;height:767px;background:#f8f8f8;"></div>
<svg style="left:1904px;top:224px;" width="10" height="7" viewBox="0 0 10 7" fill="none"><path d="M0 6.5 L5 0.5 L10 6.5 Z" fill="#6e6e6e"/></svg>
<svg style="left:1904px;top:976px;" width="10" height="7" viewBox="0 0 10 7" fill="none"><path d="M0 0.5 L5 6.5 L10 0.5 Z" fill="#6e6e6e"/></svg>
<div style="left:1905px;top:555px;width:9px;height:328px;background:#727272;border-radius:4.5px;"></div>
<div class="t" style="top:945.0px;font-size:20px;line-height:26px;color:#bbbbbb;letter-spacing:-0.054px;left:1526px;">Activer Windows</div>
<div class="t" style="top:970.5px;font-size:15px;line-height:20px;color:#c4c4c4;letter-spacing:-0.105px;left:1526px;">Accédez aux paramètres pour activer Windows.</div>
<div style="left:0px;top:0px;width:1920px;height:186px;background:#f8f8f8;"></div>
<svg style="left:16px;top:15px;" width="17" height="17" viewBox="0 0 17 17" fill="none"><rect x="4.4" y="0.5" width="12.2" height="16" rx="1.2" fill="#21a366"/><rect x="10.5" y="0.5" width="6.1" height="5.3" fill="#33c481"/><rect x="10.5" y="5.8" width="6.1" height="5.3" fill="#107c41"/><rect x="4.4" y="11.1" width="12.2" height="5.4" fill="#185c37"/><rect x="4.4" y="5.8" width="6.1" height="5.3" fill="#107c41"/><rect x="0" y="3.8" width="9.6" height="9.6" rx="1" fill="#0e7038"/><text x="4.8" y="11.4" font-family="Liberation Sans,sans-serif" font-size="7.5" font-weight="700" fill="#fff" text-anchor="middle">X</text></svg>
<div class="t" style="top:15.9px;font-size:12px;line-height:17px;color:#242424;letter-spacing:-0.144px;left:48px;">Enregistrement automatique</div>
<div style="left:202px;top:13px;width:42px;height:20px;border:1px solid #616161;border-radius:10px;box-sizing:border-box;background:#f8f8f8;"></div>
<div style="left:207px;top:17px;width:12px;height:12px;background:#5c5c5c;border-radius:6px;"></div>
<svg style="left:255px;top:15px;" width="18" height="17" viewBox="0 0 18 17" fill="none"><path d="M1.5 1.5 H13.5 L16.5 4.5 V15.5 H1.5 Z" stroke="#ad3fbd" stroke-width="1.7" fill="#e3b3ea"/><rect x="4.8" y="1.5" width="7.4" height="4.6" stroke="#ad3fbd" stroke-width="1.4" fill="#f6e9f8"/><rect x="4.8" y="10" width="8.4" height="5.5" stroke="#ad3fbd" stroke-width="1.4" fill="#f6e9f8"/></svg>
<svg style="left:284px;top:14px;" width="18" height="18" viewBox="0 0 18 18" fill="none"><path d="M2 2.5 V8 H7.5" stroke="#3a3a3a" stroke-width="1.4" stroke-linecap="round" stroke-linejoin="round"/><path d="M2.3 7.6 C5 3 10.5 2.3 13.2 5.2 C16 8.3 14 12.5 9 16.5" stroke="#3a3a3a" stroke-width="1.4" stroke-linecap="round"/></svg>
<svg style="left:305px;top:20px;" width="8" height="6" viewBox="0 0 8 6" fill="none"><path d="M1 1.5 L4 4.5 L7 1.5" stroke="#3a3a3a" stroke-width="1.2"/></svg>
<svg style="left:324px;top:14px;" width="18" height="18" viewBox="0 0 18 18" fill="none"><path d="M16 2.5 V8 H10.5" stroke="#b5b5b5" stroke-width="1.4" stroke-linecap="round" stroke-linejoin="round"/><path d="M15.7 7.6 C13 3 7.5 2.3 4.8 5.2 C2 8.3 4 12.5 9 16.5" stroke="#b5b5b5" stroke-width="1.4" stroke-linecap="round"/></svg>
<svg style="left:344px;top:20px;" width="8" height="6" viewBox="0 0 8 6" fill="none"><path d="M1 1.5 L4 4.5 L7 1.5" stroke="#b5b5b5" stroke-width="1.2"/></svg>
<svg style="left:365px;top:18px;" width="11" height="10" viewBox="0 0 11 10" fill="none"><path d="M1 1.5 H10" stroke="#3a3a3a" stroke-width="1.3"/><path d="M2 5 L5.5 8.5 L9 5" stroke="#3a3a3a" stroke-width="1.3"/></svg>
<div class="t" style="top:16.1px;font-size:12px;line-height:17px;color:#242424;letter-spacing:0.094px;left:400px;">v-tec-proposition-1 (1).xlsx</div>
<svg style="left:548.0px;top:21.25px;" width="10" height="6.5" viewBox="0 0 10 6.5" fill="none"><path d="M1 1 L5.0 5.5 L9 1" stroke="#2b2b2b" stroke-width="1.2" stroke-linejoin="miter"/></svg>
<div style="left:784px;top:8px;width:368px;height:32px;background:#f9f9f9;border:1px solid #c9c9c9;border-radius:3px;box-sizing:border-box;box-shadow:0 1px 2px rgba(0,0,0,.18);"></div>
<svg style="left:805px;top:16px;" width="16" height="16" viewBox="0 0 16 16" fill="none"><circle cx="9.5" cy="6" r="4.6" stroke="#555" stroke-width="1.2"/><path d="M6.2 9.4 L1.5 14.2" stroke="#555" stroke-width="1.3" stroke-linecap="round"/></svg>
<div class="t" style="top:15.2px;font-size:13px;line-height:18px;color:#555;letter-spacing:-0.119px;left:833px;">Rechercher</div>
<div class="t" style="top:15.9px;font-size:12px;line-height:17px;color:#242424;letter-spacing:-0.169px;left:1612px;">adrien roussel</div>
<div style="left:1694px;top:12px;width:24px;height:24px;background:#0e4a8c;border-radius:12px;"></div>
<div class="t" style="top:17.0px;font-size:10.5px;line-height:15px;color:#fff;left:1406px;width:600px;text-align:center;">AR</div>
<svg style="left:1744px;top:14px;" width="18" height="17" viewBox="0 0 18 17" fill="none"><path d="M4.5 1.5 H13.5 L17 6 L9 15.5 L1 6 Z" stroke="#3a3a3a" stroke-width="1.2" stroke-linejoin="round"/><path d="M1 6 H17 M6.2 6 L9 15 L11.8 6 M6.2 6 L7.5 1.5 M11.8 6 L10.5 1.5" stroke="#3a3a3a" stroke-width="1"/></svg>
<div style="left:1795px;top:23px;width:10px;height:1px;background:#333;"></div>
<svg style="left:1842px;top:17px;" width="12" height="12" viewBox="0 0 12 12" fill="none"><rect x="0.6" y="2.6" width="8.4" height="8.4" rx="1.5" stroke="#333" stroke-width="1.1"/><path d="M3 2.4 V2 Q3 .6 4.4 .6 H9.6 Q11.4 .6 11.4 2.4 V7.6 Q11.4 9 10 9 H9.4" stroke="#333" stroke-width="1.1"/></svg>
<svg style="left:1890px;top:17px;" width="12" height="12" viewBox="0 0 12 12" fill="none"><path d="M0.8 0.8 L11.2 11.2 M11.2 0.8 L0.8 11.2" stroke="#333" stroke-width="1.2"/></svg>
<div class="t" style="top:54.5px;font-size:13px;line-height:18px;color:#242424;letter-spacing:-0.286px;left:12px;">Fichier</div>
<div class="t" style="top:54.5px;font-size:13px;line-height:18px;color:#242424;letter-spacing:-0.272px;left:68px;">Accueil</div>
<div class="t" style="top:54.5px;font-size:13px;line-height:18px;color:#242424;letter-spacing:0.016px;left:130px;">Insertion</div>
<div class="t" style="top:54.5px;font-size:13px;line-height:18px;color:#242424;letter-spacing:0.163px;left:201px;">Mise en page</div>
<div class="t" style="top:54.5px;font-size:13px;line-height:18px;color:#242424;letter-spacing:-0.147px;left:302px;">Formules</div>
<div class="t" style="top:54.5px;font-size:13px;line-height:18px;color:#111;letter-spacing:0.138px;left:376px;-webkit-text-stroke:0.3px #111;">Données</div>
<div class="t" style="top:54.5px;font-size:13px;line-height:18px;color:#242424;letter-spacing:-0.232px;left:449px;">Révision</div>
<div class="t" style="top:54.5px;font-size:13px;line-height:18px;color:#242424;letter-spacing:0.004px;left:518px;">Affichage</div>
<div class="t" style="top:54.5px;font-size:13px;line-height:18px;color:#242424;letter-spacing:0.117px;left:593px;">Développeur</div>
<div class="t" style="top:54.5px;font-size:13px;line-height:18px;color:#242424;letter-spacing:-0.005px;left:688px;">Aide</div>
<div style="left:376px;top:73px;width:53px;height:2px;background:#107c41;border-radius:1px;"></div>
<div class="t" style="top:54.5px;font-size:13px;line-height:18px;color:#0e7a3d;letter-spacing:0.081px;left:736px;">Création de tableau</div>
<div style="left:1700px;top:51px;width:111px;height:24px;border:1px solid #8a8a8a;border-radius:4px;box-sizing:border-box;background:#f9f9f9;"></div>
<svg style="left:1706px;top:57px;" width="13" height="13" viewBox="0 0 13 13" fill="none"><path d="M1.2 1.2 H10.8 V8.2 H5 L2.6 10.6 V8.2 H1.2 Z" stroke="#333" stroke-width="1.1" stroke-linejoin="round"/></svg>
<div class="t" style="top:54.5px;font-size:13px;line-height:18px;color:#242424;letter-spacing:-0.043px;left:1721px;">Commentaires</div>
<div style="left:1820px;top:51px;width:88px;height:24px;background:#107c41;border-radius:4px;"></div>
<svg style="left:1825px;top:56px;" width="14" height="14" viewBox="0 0 14 14" fill="none"><path d="M5.5 3 H2.2 Q1.2 3 1.2 4 V11.5 Q1.2 12.5 2.2 12.5 H10 Q11 12.5 11 11.5 V9.5" stroke="#fff" stroke-width="1.1"/><path d="M8 1.5 L12.5 5 L8 8.5 V6.4 Q5 6.2 3.6 9 Q3.8 4 8 3.7 Z" stroke="#fff" stroke-width="1" stroke-linejoin="round"/></svg>
<div class="t" style="top:54.5px;font-size:13px;line-height:18px;color:#fff;letter-spacing:0.018px;left:1841px;">Partager</div>
<svg style="left:1896px;top:61px;" width="8" height="6" viewBox="0 0 8 6" fill="none"><path d="M1 1.5 L4 4.5 L7 1.5" stroke="#fff" stroke-width="1.2"/></svg>
<div style="left:8px;top:78px;width:1904px;height:100px;background:#f9f9f9;border-radius:8px;box-shadow:0 2.5px 1px 2.5px #e2e2e2;"></div>
<svg style="left:40px;top:86px;" width="32" height="32" viewBox="0 0 32 32" fill="none"><path d="M2.5 5.5 V24 C2.5 27 8 28.6 12 28.6" stroke="#3b3b3b" stroke-width="1.2"/><path d="M23.5 5.5 V14.5" stroke="#3b3b3b" stroke-width="1.2"/><ellipse cx="13" cy="5.5" rx="10.5" ry="4" stroke="#3b3b3b" stroke-width="1.2"/><rect x="14" y="16" width="15" height="14" fill="#fafafa" stroke="#3b3b3b" stroke-width="1.2"/><rect x="14.6" y="16.6" width="13.8" height="2.6" fill="#c9c9c9"/><path d="M14 19.5 H29 M14 23 H29 M14 26.5 H29 M19 19.5 V30 M24 19.5 V30" stroke="#3b3b3b" stroke-width="1"/></svg>
<div class="t" style="top:120.1px;font-size:12px;line-height:17px;color:#242424;left:-247.09px;width:600px;text-align:center;letter-spacing:-0.184px;">Obtenir des</div>
<div class="t" style="top:136.1px;font-size:12px;line-height:17px;color:#242424;left:-252.15px;width:600px;text-align:center;letter-spacing:-0.291px;">données</div>
<svg style="left:73.4px;top:142.4px;" width="7.2" height="5.2" viewBox="0 0 7.2 5.2" fill="none"><path d="M1 1.1 L3.6 4.1 L6.2 1.1" stroke="#3b3b3b" stroke-width="1.1"/></svg>
<svg style="left:93px;top:86px;" width="16" height="17" viewBox="0 0 16 17" fill="none"><path d="M6 15.3 H1 V0.7 H8.5 L13 5.2 V7" stroke="#3b3b3b" stroke-width="1.2" stroke-linejoin="round"/><path d="M8.5 0.7 V5.2 H13" stroke="#3b3b3b" stroke-width="1.1"/></svg>
<svg style="left:101px;top:93px;" width="8" height="9" viewBox="0 0 8 9" fill="none"><rect x="0.6" y="0.6" width="6.6" height="7.8" stroke="#3b3b3b" stroke-width="1.1"/><path d="M2.2 3 H5.6 M2.2 4.8 H5.6 M2.2 6.6 H5.6" stroke="#3b3b3b" stroke-width="0.9"/></svg>
<div class="t" style="top:87.1px;font-size:12px;line-height:17px;color:#242424;letter-spacing:-0.001px;left:112px;">À partir d'un fichier texte/CSV</div>
<svg style="left:93px;top:112px;" width="16" height="17" viewBox="0 0 16 17" fill="none"><path d="M6 15.3 H1 V0.7 H8.5 L13 5.2 V7" stroke="#3b3b3b" stroke-width="1.2" stroke-linejoin="round"/><path d="M8.5 0.7 V5.2 H13" stroke="#3b3b3b" stroke-width="1.1"/></svg>
<svg style="left:99px;top:118px;" width="10" height="10" viewBox="0 0 10 10" fill="none"><circle cx="5" cy="5" r="4.6" fill="#1b8fd6"/><path d="M0.8 5 H9.2 M5 0.8 V9.2" stroke="#fff" stroke-width="0.9"/><ellipse cx="5" cy="5" rx="2.1" ry="4.2" stroke="#fff" stroke-width="0.8"/></svg>
<div class="t" style="top:113.1px;font-size:12px;line-height:17px;color:#242424;letter-spacing:0.020px;left:112px;">À partir du web</div>
<svg style="left:92px;top:138px;" width="16" height="16" viewBox="0 0 16 16" fill="none"><rect x="0.7" y="0.7" width="14.2" height="14.2" stroke="#3b3b3b" stroke-width="1.2"/><path d="M0.7 5 H15 M0.7 8.3 H15 M0.7 11.6 H15 M7.8 5 V15" stroke="#3b3b3b" stroke-width="1"/><path d="M3 2.2 H6.4 L4.7 3.9 Z M9.6 2.2 H13 L11.3 3.9 Z" fill="#1b8fd6"/></svg>
<div class="t" style="top:139.1px;font-size:12px;line-height:17px;color:#242424;letter-spacing:-0.104px;left:112px;">À partir de Tableau ou d'une Plage</div>
<svg style="left:306px;top:86px;" width="18" height="17" viewBox="0 0 18 17" fill="none"><path d="M5.5 14 H1 V1 H16.5 V7" stroke="#3b3b3b" stroke-width="1.2"/><path d="M1 4.6 H16.5 M1 8.6 H6 M6 1 V8.6 M11 1 V6.5" stroke="#3b3b3b" stroke-width="1"/><path d="M7.2 15.6 V9.3 H9.4 L10.3 8 H13.5 L14.4 9.3 H16.8 V15.6 Z" stroke="#1b8fd6" stroke-width="1.1" fill="#fafafa"/><circle cx="12" cy="12.3" r="1.9" stroke="#1b8fd6" stroke-width="1.1"/></svg>
<div class="t" style="top:87.1px;font-size:12px;line-height:17px;color:#242424;letter-spacing:0.035px;left:327px;">À partir de l'image</div>
<svg style="left:426.4px;top:93.4px;" width="7.2" height="5.2" viewBox="0 0 7.2 5.2" fill="none"><path d="M1 1.1 L3.6 4.1 L6.2 1.1" stroke="#3b3b3b" stroke-width="1.1"/></svg>
<svg style="left:308px;top:112px;" width="16" height="17" viewBox="0 0 16 17" fill="none"><path d="M6 15.3 H1 V0.7 H8.5 L13 5.2 V7" stroke="#3b3b3b" stroke-width="1.2" stroke-linejoin="round"/><path d="M8.5 0.7 V5.2 H13" stroke="#3b3b3b" stroke-width="1.1"/></svg>
<svg style="left:313px;top:118px;" width="11" height="11" viewBox="0 0 11 11" fill="none"><circle cx="5.5" cy="5.5" r="4.6" stroke="#1b8fd6" stroke-width="1.2" fill="#fafafa"/><path d="M5.5 2.8 V5.8 H7.8" stroke="#3b3b3b" stroke-width="1"/></svg>
<div class="t" style="top:113.1px;font-size:12px;line-height:17px;color:#242424;letter-spacing:-0.336px;left:327px;">Sources récentes</div>
<svg style="left:308px;top:138px;" width="16" height="17" viewBox="0 0 16 17" fill="none"><path d="M6 15.3 H1 V0.7 H8.5 L13 5.2 V7" stroke="#3b3b3b" stroke-width="1.2" stroke-linejoin="round"/><path d="M8.5 0.7 V5.2 H13" stroke="#3b3b3b" stroke-width="1.1"/></svg>
<svg style="left:314px;top:144px;" width="10" height="11" viewBox="0 0 10 11" fill="none"><path d="M0.8 2.6 V9.2 Q0.8 10.4 4.7 10.4 Q8.6 10.4 8.6 9.2 V2.6" stroke="#e0701a" stroke-width="1.2" fill="#fafafa"/><ellipse cx="4.7" cy="2.6" rx="3.9" ry="1.7" stroke="#e0701a" stroke-width="1.2" fill="#fafafa"/></svg>
<div class="t" style="top:139.1px;font-size:12px;line-height:17px;color:#242424;letter-spacing:-0.130px;left:327px;">Connexions existantes</div>
<div class="t" style="top:159.5px;font-size:11.5px;line-height:16px;color:#333;left:-64.01px;width:600px;text-align:center;letter-spacing:-0.014px;">Récupérer et transformer des données</div>
<div style="left:461px;top:84px;width:1px;height:88px;background:#d9d9d9;"></div>
<svg style="left:485px;top:86px;" width="32" height="34" viewBox="0 0 32 34" fill="none"><path d="M10 20.5 H1.8 V1.2 H9" stroke="#3b3b3b" stroke-width="1.2"/><path d="M13 28 H6 V3.6 H16.5 L23.2 10.3 V14" stroke="#3b3b3b" stroke-width="1.2" stroke-linejoin="round"/><path d="M16.5 3.6 V10.3 H23.2" stroke="#3b3b3b" stroke-width="1.1"/><path d="M14.2 23.4 A6.6 6.6 0 0 1 25.6 18.6 M27.2 22 A6.6 6.6 0 0 1 15.8 27.4" stroke="#21a366" stroke-width="1.4"/><path d="M26.6 15.6 V19.4 H22.8 M14.8 30.4 V26.6 H18.6" stroke="#21a366" stroke-width="1.3"/></svg>
<div class="t" style="top:121.1px;font-size:12px;line-height:17px;color:#242424;left:197.97px;width:600px;text-align:center;letter-spacing:-0.069px;">Actualiser</div>
<div class="t" style="top:137.1px;font-size:12px;line-height:17px;color:#242424;left:192.12px;width:600px;text-align:center;letter-spacing:0.247px;">tout</div>
<svg style="left:506.4px;top:143.4px;" width="7.2" height="5.2" viewBox="0 0 7.2 5.2" fill="none"><path d="M1 1.1 L3.6 4.1 L6.2 1.1" stroke="#3b3b3b" stroke-width="1.1"/></svg>
<svg style="left:533px;top:87px;" width="17" height="15" viewBox="0 0 17 15" fill="none"><rect x="0.7" y="0.7" width="15" height="12.6" stroke="#3b3b3b" stroke-width="1.2"/><path d="M0.7 2.4 H15.7" stroke="#3b3b3b" stroke-width="1.6"/><path d="M10.2 2.4 V13.3" stroke="#3b3b3b" stroke-width="1"/><path d="M12 5 H14 M12 7.6 H14 M12 10.2 H14" stroke="#1b8fd6" stroke-width="1.2"/></svg>
<div class="t" style="top:87.1px;font-size:12px;line-height:17px;color:#242424;letter-spacing:-0.170px;left:553px;">Requêtes et connexions</div>
<svg style="left:535px;top:113px;" width="13" height="16" viewBox="0 0 13 16" fill="none"><rect x="0.7" y="0.7" width="11" height="14.2" rx="1" stroke="#b3b3b3" stroke-width="1.1"/><rect x="3" y="4" width="2.2" height="2.2" stroke="#b3b3b3" stroke-width="0.9"/><path d="M6.8 5.1 H9.6" stroke="#b3b3b3" stroke-width="0.9"/><rect x="3" y="9" width="2.2" height="2.2" stroke="#b3b3b3" stroke-width="0.9"/><path d="M6.8 10.1 H9.6" stroke="#b3b3b3" stroke-width="0.9"/></svg>
<div class="t" style="top:113.1px;font-size:12px;line-height:17px;color:#a8a8a8;letter-spacing:-0.169px;left:553px;">Propriétés</div>
<svg style="left:535px;top:138px;" width="16" height="17" viewBox="0 0 16 17" fill="none"><path d="M6 15.3 H1 V0.7 H8.5 L13 5.2 V7" stroke="#b3b3b3" stroke-width="1.2" stroke-linejoin="round"/><path d="M8.5 0.7 V5.2 H13" stroke="#b3b3b3" stroke-width="1.1"/></svg>
<svg style="left:541px;top:146px;" width="9" height="8" viewBox="0 0 9 8" fill="none"><path d="M3.6 5.4 H2.6 A1.9 1.9 0 0 1 2.6 1.6 H4 M5 1.6 H6.2 A1.9 1.9 0 0 1 6.2 5.4 H5 M3 3.5 H6" stroke="#b3b3b3" stroke-width="1"/></svg>
<div class="t" style="top:139.1px;font-size:12px;line-height:17px;color:#a8a8a8;letter-spacing:-0.286px;left:553px;">Liaisons de classeur</div>
<div class="t" style="top:159.5px;font-size:11.5px;line-height:16px;color:#333;left:277.97px;width:600px;text-align:center;letter-spacing:-0.063px;">Requêtes et connexions</div>
<div style="left:694px;top:84px;width:1px;height:88px;background:#d9d9d9;"></div>
<div style="left:704px;top:90px;width:174px;height:60px;border:1px solid #d4d4d4;border-radius:4px;box-sizing:border-box;background:#fafafa;"></div>
<svg style="left:730px;top:99px;" width="30" height="26" viewBox="0 0 30 26" fill="none"><path d="M2 8.5 L15 1.5 L28 8.5 Z" stroke="#3b3b3b" stroke-width="1.3" stroke-linejoin="round"/><path d="M5.5 10.5 V20.5 M10.2 10.5 V20.5 M15 10.5 V20.5 M19.8 10.5 V20.5 M24.5 10.5 V20.5" stroke="#3b3b3b" stroke-width="1.3"/><path d="M3.5 10.5 H26.5 M3.5 20.5 H26.5 M1.5 23.8 H28.5" stroke="#3b3b3b" stroke-width="1.3"/></svg>
<div class="t" style="top:129.1px;font-size:12px;line-height:17px;color:#242424;left:444.87px;width:600px;text-align:center;letter-spacing:-0.253px;">Données b...</div>
<svg style="left:808px;top:102px;" width="32" height="28" viewBox="0 0 32 28" fill="none"><path d="M17 13.4 H1.2 V1.2 H27.8 V9" stroke="#3b3b3b" stroke-width="1.3"/><path d="M7 1.6 Q6 4 3.4 4.2 M3.4 10.4 Q6 10.6 7 13 M22 1.6 Q23 4 25.6 4.2" stroke="#3b3b3b" stroke-width="1.1"/><ellipse cx="14.5" cy="7.3" rx="3.8" ry="4.6" stroke="#3b3b3b" stroke-width="1.2"/><path d="M17.6 13 V22 Q17.6 24.6 23.8 24.6 Q30 24.6 30 22 V13" fill="#fafafa" stroke="#3b3b3b" stroke-width="1.2"/><ellipse cx="23.8" cy="13" rx="6.2" ry="2.5" fill="#fafafa" stroke="#3b3b3b" stroke-width="1.2"/><path d="M17.6 16 Q17.6 18.6 23.8 18.6 Q30 18.6 30 16 M17.6 19 Q17.6 21.6 23.8 21.6 Q30 21.6 30 19" stroke="#3b3b3b" stroke-width="1.1"/></svg>
<div class="t" style="top:129.1px;font-size:12px;line-height:17px;color:#242424;left:522.74px;width:600px;text-align:center;letter-spacing:-0.526px;">Devises</div>
<svg style="left:867px;top:97px;" width="8" height="6" viewBox="0 0 8 6" fill="none"><path d="M1 4.5 L4 1.5 L7 4.5" stroke="#c4c4c4" stroke-width="1.1"/></svg>
<div style="left:863px;top:111px;width:15px;height:20px;border:1px solid #7a7a7a;box-sizing:border-box;border-radius:3px 3px 0 0;background:#fafafa;"></div>
<div style="left:863px;top:130px;width:15px;height:20px;border:1px solid #7a7a7a;box-sizing:border-box;border-radius:0 0 4px 3px;background:#fafafa;"></div>
<svg style="left:866.9px;top:118.4px;" width="7.2" height="5.2" viewBox="0 0 7.2 5.2" fill="none"><path d="M1 1.1 L3.6 4.1 L6.2 1.1" stroke="#3b3b3b" stroke-width="1.1"/></svg>
<div style="left:867px;top:137px;width:7px;height:1px;background:#3b3b3b;"></div>
<svg style="left:866.9px;top:140.4px;" width="7.2" height="5.2" viewBox="0 0 7.2 5.2" fill="none"><path d="M1 1.1 L3.6 4.1 L6.2 1.1" stroke="#3b3b3b" stroke-width="1.1"/></svg>
<div class="t" style="top:159.5px;font-size:11.5px;line-height:16px;color:#333;left:490.94px;width:600px;text-align:center;letter-spacing:-0.124px;">Types de données</div>
<div style="left:888px;top:84px;width:1px;height:88px;background:#d9d9d9;"></div>
<svg style="left:899px;top:93px;" width="20" height="19" viewBox="0 0 20 19" fill="none"><text x="1.5" y="8" font-family="Liberation Sans,sans-serif" font-size="8.5" fill="#a3a3a3">A</text><text x="1.5" y="17" font-family="Liberation Sans,sans-serif" font-size="8.5" font-weight="700" fill="#909090">Z</text><path d="M14 1.5 V16.5 M10.6 13 L14 16.5 L17.4 13" stroke="#a3a3a3" stroke-width="1.2"/></svg>
<svg style="left:899px;top:124px;" width="20" height="19" viewBox="0 0 20 19" fill="none"><text x="1.5" y="8.5" font-family="Liberation Sans,sans-serif" font-size="8.5" font-weight="700" fill="#909090">Z</text><text x="1.5" y="17.5" font-family="Liberation Sans,sans-serif" font-size="8.5" fill="#a3a3a3">A</text><path d="M14 1.5 V16.5 M10.6 13 L14 16.5 L17.4 13" stroke="#a3a3a3" stroke-width="1.2"/></svg>
<svg style="left:929px;top:86px;" width="30" height="30" viewBox="0 0 30 30" fill="none"><rect x="1" y="1.2" width="27.6" height="27" stroke="#a8a8a8" stroke-width="1.2"/><rect x="1.6" y="1.8" width="26.4" height="3" fill="#cfcfcf"/><path d="M1 5.2 H28.6 M14.8 5.2 V28" stroke="#a8a8a8" stroke-width="1.1"/><text x="4" y="16" font-family="Liberation Sans,sans-serif" font-size="11" fill="#a8a8a8">Z</text><text x="3.6" y="26" font-family="Liberation Sans,sans-serif" font-size="11" fill="#a8a8a8">A</text><text x="17.6" y="16" font-family="Liberation Sans,sans-serif" font-size="11" fill="#a8a8a8">A</text><text x="18" y="26" font-family="Liberation Sans,sans-serif" font-size="11" fill="#a8a8a8">Z</text></svg>
<div class="t" style="top:120.1px;font-size:12px;line-height:17px;color:#a8a8a8;left:643.78px;width:600px;text-align:center;letter-spacing:-0.443px;">Trier</div>
<div style="left:972px;top:89px;width:1px;height:62px;background:#d9d9d9;"></div>
<svg style="left:984px;top:86px;" width="30" height="30" viewBox="0 0 30 30" fill="none"><path d="M1.4 1.4 H27.4 V5 L17.4 17 V28.4 H11.4 V17 L1.4 5 Z" stroke="#a8a8a8" stroke-width="1.3" stroke-linejoin="round"/></svg>
<div class="t" style="top:120.1px;font-size:12px;line-height:17px;color:#a8a8a8;left:698.88px;width:600px;text-align:center;letter-spacing:-0.237px;">Filtrer</div>
<svg style="left:1026px;top:86px;" width="17" height="17" viewBox="0 0 17 17" fill="none"><path d="M1 1 H15 V2.6 L9.6 8.4 M6.4 8.4 L1 2.6 V1 M6.4 8.4 V15.4 H7.5" stroke="#b3b3b3" stroke-width="1.2" stroke-linejoin="round"/></svg>
<svg style="left:1034px;top:94px;" width="9" height="9" viewBox="0 0 9 9" fill="none"><path d="M1 1 L8 8 M8 1 L1 8" stroke="#b3b3b3" stroke-width="1.1"/></svg>
<div class="t" style="top:87.1px;font-size:12px;line-height:17px;color:#a8a8a8;letter-spacing:-0.257px;left:1046px;">Effacer</div>
<svg style="left:1026px;top:112px;" width="17" height="17" viewBox="0 0 17 17" fill="none"><path d="M1 1 H15 V2.6 L9.6 8.4 M6.4 8.4 L1 2.6 V1 M6.4 8.4 V15.4 H7.5" stroke="#b3b3b3" stroke-width="1.2" stroke-linejoin="round"/></svg>
<svg style="left:1032px;top:119px;" width="11" height="11" viewBox="0 0 11 11" fill="none"><path d="M1.6 5 A4 4 0 0 1 9 3.4 M9.4 6 A4 4 0 0 1 2 7.6" stroke="#b3b3b3" stroke-width="1.1"/><path d="M9.4 1 V3.8 H6.6 M1.6 10 V7.2 H4.4" stroke="#b3b3b3" stroke-width="1"/></svg>
<div class="t" style="top:113.1px;font-size:12px;line-height:17px;color:#a8a8a8;letter-spacing:-0.155px;left:1046px;">Réappliquer</div>
<svg style="left:1026px;top:138px;" width="17" height="17" viewBox="0 0 17 17" fill="none"><path d="M1 1 H15 V2.6 L9.6 8.4 M6.4 8.4 L1 2.6 V1 M6.4 8.4 V15.4 H7.5" stroke="#2b2b2b" stroke-width="1.2" stroke-linejoin="round"/></svg>
<svg style="left:1033px;top:146px;" width="10" height="10" viewBox="0 0 10 10" fill="none"><circle cx="5" cy="5" r="2.6" stroke="#1b8fd6" stroke-width="1.3"/><path d="M5 0.4 V2 M5 8 V9.6 M1 2.6 L2.4 3.5 M7.6 6.5 L9 7.4 M1 7.4 L2.4 6.5 M7.6 3.5 L9 2.6" stroke="#1b8fd6" stroke-width="1.3"/><circle cx="5" cy="5" r="0.9" fill="#1b8fd6"/></svg>
<div class="t" style="top:139.1px;font-size:12px;line-height:17px;color:#242424;letter-spacing:-0.134px;left:1046px;">Avancé</div>
<div class="t" style="top:159.5px;font-size:11.5px;line-height:16px;color:#333;left:707.04px;width:600px;text-align:center;letter-spacing:0.079px;">Trier et filtrer</div>
<div style="left:1125px;top:84px;width:1px;height:88px;background:#d9d9d9;"></div>
<svg style="left:1143px;top:86px;" width="34" height="32" viewBox="0 0 34 32" fill="none"><path d="M6 5.5 H17.5 M9 9.5 H17.5 M6 13.5 H17.5" stroke="#2b2b2b" stroke-width="1.2"/><rect x="22.4" y="1.2" width="9" height="27" stroke="#2b2b2b" stroke-width="1.3"/><path d="M22.4 10.2 H31.4 M22.4 19.2 H31.4" stroke="#2b2b2b" stroke-width="1.2"/><path d="M25 5.8 H29 M25 14.8 H29 M25 23.8 H29" stroke="#1b8fd6" stroke-width="1.3"/><path d="M6.4 13 C1 14 0.4 21 5.4 23.6 Q8 25 13 24.6" stroke="#1b8fd6" stroke-width="1.3"/><path d="M9.4 20.4 L13.8 24.6 L9.4 29" stroke="#1b8fd6" stroke-width="1.3"/></svg>
<div class="t" style="top:120.1px;font-size:12px;line-height:17px;color:#242424;left:860.52px;width:600px;text-align:center;letter-spacing:0.036px;">Convertir</div>
<svg style="left:1193px;top:86px;" width="18" height="17" viewBox="0 0 18 17" fill="none"><path d="M5 4.6 H16.4 V15.2 H1.2 V9.5" stroke="#b3b3b3" stroke-width="1.1"/><path d="M1.2 11.6 H16.4 M6.4 9 V15.2 M11.4 4.6 V15.2 M8 8 H16.4" stroke="#b3b3b3" stroke-width="1"/><path d="M5.2 0.6 L1.6 6 H4.2 L2.6 10.4 L8 4.4 H5.2 L7.4 0.6 Z" fill="#b3b3b3"/></svg>
<div class="t" style="top:87.1px;font-size:12px;line-height:17px;color:#a8a8a8;letter-spacing:-0.185px;left:1214px;">Remplissage instantané</div>
<svg style="left:1195px;top:112px;" width="17" height="17" viewBox="0 0 17 17" fill="none"><rect x="1" y="1" width="11" height="14" stroke="#c0c0c0" stroke-width="1"/><rect x="1.5" y="1.5" width="10" height="4" fill="#cdcdcd"/><rect x="1.5" y="10.5" width="6" height="4" fill="#cdcdcd"/><path d="M1 5.8 H12 M1 10.2 H12" stroke="#c0c0c0" stroke-width="1"/><path d="M9 9.4 L15.4 15.8 M15.4 9.4 L9 15.8" stroke="#b3b3b3" stroke-width="1.2"/></svg>
<div class="t" style="top:113.1px;font-size:12px;line-height:17px;color:#a8a8a8;letter-spacing:-0.048px;left:1214px;">Supprimer les doublons</div>
<svg style="left:1193px;top:138px;" width="18" height="17" viewBox="0 0 18 17" fill="none"><path d="M7 3.4 H1.2 V7 H6.4 M6.4 10.6 H1.2 V14.4 H7" stroke="#2b2b2b" stroke-width="1.2"/><path d="M8.4 3.4 L10.6 5.6 L15.6 0.8" stroke="#21a366" stroke-width="1.3"/><circle cx="12.4" cy="11.8" r="3.7" stroke="#e8413a" stroke-width="1.4"/><path d="M9.8 9.2 L15 14.4" stroke="#e8413a" stroke-width="1.4"/></svg>
<div class="t" style="top:139.1px;font-size:12px;line-height:17px;color:#242424;letter-spacing:-0.130px;left:1214px;">Validation des données</div>
<svg style="left:1346.7px;top:144.2px;" width="7.6" height="5.6" viewBox="0 0 7.6 5.6" fill="none"><path d="M1 1.2999999999999998 L3.8 4.3 L6.6 1.2999999999999998" stroke="#3b3b3b" stroke-width="1.1"/></svg>
<svg style="left:1365px;top:86px;" width="18" height="16" viewBox="0 0 18 16" fill="none"><path d="M7.4 5.2 V1.4 H1.2 V6 H3 M3 9.6 H1.2 V14.4 H7.4 V10.2" stroke="#2b2b2b" stroke-width="1.2"/><path d="M2.4 7.8 H9 M6.8 5.4 L9.2 7.8 L6.8 10.2" stroke="#1b8fd6" stroke-width="1.2"/><rect x="11" y="5.2" width="6.2" height="5" stroke="#1b8fd6" stroke-width="1.2"/><path d="M12.8 7.7 H15.4" stroke="#1b8fd6" stroke-width="1.1"/></svg>
<div class="t" style="top:87.1px;font-size:12px;line-height:17px;color:#242424;letter-spacing:-0.036px;left:1386px;">Consolider</div>
<svg style="left:1365px;top:112px;" width="18" height="17" viewBox="0 0 18 17" fill="none"><rect x="1" y="5.6" width="5.6" height="5" stroke="#b3b3b3" stroke-width="1"/><rect x="10.4" y="0.8" width="6" height="5.4" stroke="#b3b3b3" stroke-width="1"/><rect x="10.4" y="10.4" width="6" height="5.4" stroke="#b3b3b3" stroke-width="1"/><path d="M6.6 8 H8.6 V3.4 H10.4 M8.6 8 V13 H10.4 M2.4 7.4 H5.2 M2.4 9 H5.2 M12 2.8 H15 M12 4.4 H15 M12 12.4 H15 M12 14 H15" stroke="#b3b3b3" stroke-width="0.9"/></svg>
<div class="t" style="top:113.1px;font-size:12px;line-height:17px;color:#a8a8a8;letter-spacing:-0.225px;left:1386px;">Relations</div>
<svg style="left:1365px;top:138px;" width="18" height="17" viewBox="0 0 18 17" fill="none"><path d="M1.4 3.4 L6 1 L15 1.6 Q16.6 1.8 16.6 3.4 V13 Q16.6 14.4 15 14.6 L6 16 L1.4 13.6 Z" fill="#7fba3c"/><path d="M6 1 V16" stroke="#f2f8ea" stroke-width="1"/><path d="M8.6 5.6 H15 M8.6 9 H15 M8.6 12.4 H15 M11.8 2.6 V14.4" stroke="#d9ecc2" stroke-width="1"/><path d="M3 10 V11.6 H4.4 V6.6" stroke="#fff" stroke-width="1"/></svg>
<div class="t" style="top:139.1px;font-size:12px;line-height:17px;color:#242424;letter-spacing:-0.196px;left:1386px;">Gérer le modèle de données</div>
<div class="t" style="top:159.5px;font-size:11.5px;line-height:16px;color:#333;left:1037.04px;width:600px;text-align:center;letter-spacing:0.077px;">Outils de données</div>
<div style="left:1549px;top:84px;width:1px;height:88px;background:#d9d9d9;"></div>
<svg style="left:1575px;top:89px;" width="34" height="30" viewBox="0 0 34 30" fill="none"><rect x="1" y="1" width="9" height="7" fill="#8ab8ee"/><rect x="1" y="14.8" width="9" height="7" fill="#8ab8ee"/><path d="M10 1.4 H27.6 V12 M10 8 H27.6 M10 14.8 H21 M10 21.8 H20 M19 1.4 V21.8" stroke="#3b3b3b" stroke-width="1.1"/><path d="M1 1 H10 V21.8 H1 Z M1 8 H10 M1 14.8 H10" stroke="#1e7fd6" stroke-width="1.4"/><path d="M22.4 16.6 Q22.6 12.2 26.4 12.2 Q30.2 12.4 30 16 Q29.8 18.4 26.2 20.6 V23" stroke="#1b8fd6" stroke-width="1.5"/><circle cx="26.2" cy="26.6" r="1.1" fill="#1b8fd6"/></svg>
<div class="t" style="top:120.1px;font-size:12px;line-height:17px;color:#242424;left:1290.38px;width:600px;text-align:center;letter-spacing:-0.241px;">Analyse</div>
<div class="t" style="top:136.1px;font-size:12px;line-height:17px;color:#242424;left:1284.87px;width:600px;text-align:center;letter-spacing:-0.262px;">scénarios</div>
<svg style="left:1611.9px;top:141.4px;" width="7.2" height="5.2" viewBox="0 0 7.2 5.2" fill="none"><path d="M1 1.1 L3.6 4.1 L6.2 1.1" stroke="#3b3b3b" stroke-width="1.1"/></svg>
<svg style="left:1636px;top:86px;" width="32" height="28" viewBox="0 0 32 28" fill="none"><path d="M1.6 24.6 V1.6 H29.4 V21.6 H10 L6.6 24.6 Z" stroke="#3b3b3b" stroke-width="1.2" stroke-linejoin="round"/><path d="M1.6 7.6 H29.4 M1.6 14.6 H29.4 M1.6 21.6 H10 M10.6 1.6 V21.6 M20 1.6 V21.6" stroke="#3b3b3b" stroke-width="1"/><path d="M2.6 17.6 L7.4 13.6 L10.6 16.4 L15.6 11.4" stroke="#1b8fd6" stroke-width="1.5"/><path d="M15.6 11.4 L18.6 13.4 L25.6 5.4" stroke="#e8413a" stroke-width="1.5"/><path d="M21.6 4.4 H26.6 V9.4" stroke="#e8413a" stroke-width="1.4"/></svg>
<div class="t" style="top:120.1px;font-size:12px;line-height:17px;color:#242424;left:1352.40px;width:600px;text-align:center;letter-spacing:-0.203px;">Feuille de</div>
<div class="t" style="top:136.1px;font-size:12px;line-height:17px;color:#242424;left:1351.94px;width:600px;text-align:center;letter-spacing:-0.113px;">prévision</div>
<div class="t" style="top:159.5px;font-size:11.5px;line-height:16px;color:#333;left:1318.87px;width:600px;text-align:center;letter-spacing:-0.255px;">Prévision</div>
<div style="left:1687px;top:84px;width:1px;height:88px;background:#d9d9d9;"></div>
<svg style="left:1707px;top:87px;" width="26" height="27" viewBox="0 0 26 27" fill="none"><rect x="14.4" y="1" width="9.6" height="24.6" stroke="#2b2b2b" stroke-width="1.3"/><path d="M14.4 9.2 H24 M14.4 17.4 H24" stroke="#2b2b2b" stroke-width="1.2"/><path d="M11 1.6 H5.4 V8.4 M5.4 18 V25 H11" stroke="#8a8a8a" stroke-width="1.1"/><rect x="1" y="9.6" width="8" height="7.6" stroke="#2b2b2b" stroke-width="1.1" fill="#fafafa"/><path d="M5 11.4 V15.4 M3 13.4 H7" stroke="#1b8fd6" stroke-width="1.2"/></svg>
<div class="t" style="top:121.1px;font-size:12px;line-height:17px;color:#242424;left:1419.39px;width:600px;text-align:center;letter-spacing:-0.217px;">Grouper</div>
<svg style="left:1715.9px;top:142.4px;" width="7.2" height="5.2" viewBox="0 0 7.2 5.2" fill="none"><path d="M1 1.1 L3.6 4.1 L6.2 1.1" stroke="#3b3b3b" stroke-width="1.1"/></svg>
<svg style="left:1759px;top:87px;" width="26" height="27" viewBox="0 0 26 27" fill="none"><rect x="14.4" y="1" width="9.6" height="24.6" stroke="#2b2b2b" stroke-width="1.3"/><path d="M14.4 9.2 H24 M14.4 17.4 H24" stroke="#2b2b2b" stroke-width="1.2"/><path d="M11 1.6 H5.4 V8.4 M5.4 18 V25 H11" stroke="#8a8a8a" stroke-width="1.1"/><rect x="1" y="9.6" width="8" height="7.6" stroke="#e8413a" stroke-width="1.2" fill="#fafafa"/><path d="M1.4 16.8 L8.6 10" stroke="#e8413a" stroke-width="1.1"/></svg>
<div class="t" style="top:121.1px;font-size:12px;line-height:17px;color:#242424;left:1471.64px;width:600px;text-align:center;letter-spacing:-0.316px;">Dissocier</div>
<svg style="left:1768.0px;top:142.4px;" width="7.2" height="5.2" viewBox="0 0 7.2 5.2" fill="none"><path d="M1 1.1 L3.6 4.1 L6.2 1.1" stroke="#3b3b3b" stroke-width="1.1"/></svg>
<svg style="left:1806px;top:87px;" width="31" height="27" viewBox="0 0 31 27" fill="none"><rect x="12" y="1" width="17.4" height="24.6" stroke="#bdbdbd" stroke-width="1.1"/><path d="M12 9.2 H29.4 M12 17.4 H29.4 M20.6 1 V25.6" stroke="#bdbdbd" stroke-width="1"/><path d="M9 1.6 H4.6 V7.6" stroke="#c4c4c4" stroke-width="1"/><rect x="1" y="8" width="7.4" height="7" stroke="#bdbdbd" stroke-width="1"/><path d="M4.7 9.6 V13.4 M2.8 11.5 H6.6" stroke="#bdbdbd" stroke-width="1"/><rect x="1" y="17.6" width="7.4" height="7" stroke="#bdbdbd" stroke-width="1"/><path d="M4.7 19.2 V23 M2.8 21.1 H6.6" stroke="#bdbdbd" stroke-width="1"/></svg>
<div class="t" style="top:120.1px;font-size:12px;line-height:17px;color:#a8a8a8;left:1520.77px;width:600px;text-align:center;letter-spacing:-0.469px;">Sous-</div>
<div class="t" style="top:136.1px;font-size:12px;line-height:17px;color:#a8a8a8;left:1520.88px;width:600px;text-align:center;letter-spacing:0.164px;">total</div>
<svg style="left:1849px;top:88px;" width="16" height="12" viewBox="0 0 16 12" fill="none"><path d="M0.6 4 H4.6 M2.6 2 V6 M7 1.6 H14.4 M9.6 4.8 H14.4 M9.6 8 H14.4 M9.6 10.8 H14.4" stroke="#b3b3b3" stroke-width="1"/></svg>
<svg style="left:1849px;top:114px;" width="16" height="12" viewBox="0 0 16 12" fill="none"><path d="M0.6 4 H4.6 M7 1.6 H14.4 M9.6 4.8 H14.4 M9.6 8 H14.4 M9.6 10.8 H14.4" stroke="#b3b3b3" stroke-width="1"/></svg>
<div class="t" style="top:159.5px;font-size:11.5px;line-height:16px;color:#333;left:1473.75px;width:600px;text-align:center;letter-spacing:-0.504px;">Plan</div>
<svg style="left:1864px;top:164px;" width="9" height="9" viewBox="0 0 9 9" fill="none"><path d="M0.6 3 V0.6 H3 M3.4 3.4 L7.6 7.6 M7.8 3.6 V7.8 H3.6" stroke="#9a9a9a" stroke-width="1"/></svg>
<div style="left:1875px;top:84px;width:1px;height:88px;background:#d9d9d9;"></div>
<svg style="left:1891.5px;top:160.75px;" width="12" height="7.5" viewBox="0 0 12 7.5" fill="none"><path d="M1 1 L6.0 6.5 L11 1" stroke="#2b2b2b" stroke-width="1.3" stroke-linejoin="miter"/></svg>
<div style="left:8px;top:186px;width:102px;height:26px;background:#f9f9f9;border:1px solid #d9d9d9;border-radius:4px;box-sizing:border-box;"></div>
<div class="t" style="top:191.0px;font-size:12.5px;line-height:18px;color:#242424;letter-spacing:-0.247px;left:15px;">A50</div>
<svg style="left:93.0px;top:197.0px;" width="11" height="7" viewBox="0 0 11 7" fill="none"><path d="M1 1 L5.5 6 L10 1" stroke="#2b2b2b" stroke-width="1.3" stroke-linejoin="miter"/></svg>
<div style="left:119px;top:195px;width:2px;height:2px;background:#333;border-radius:1px;"></div>
<div style="left:119px;top:199px;width:2px;height:2px;background:#333;border-radius:1px;"></div>
<div style="left:119px;top:203px;width:2px;height:2px;background:#333;border-radius:1px;"></div>
<div style="left:130px;top:186px;width:74px;height:26px;background:#f9f9f9;border:1px solid #d9d9d9;border-radius:4px;box-sizing:border-box;"></div>
<svg style="left:137px;top:193px;" width="13" height="13" viewBox="0 0 13 13" fill="none"><path d="M1 1 L12 12 M12 1 L1 12" stroke="#bdbdbd" stroke-width="1.1"/></svg>
<svg style="left:158px;top:193px;" width="17" height="13" viewBox="0 0 17 13" fill="none"><path d="M1 7 L6 12 L16 1.2" stroke="#bdbdbd" stroke-width="1.1"/></svg>
<div class="t" style="left:184px;top:188px;font-family:'Liberation Serif',serif;font-style:italic;font-size:19px;line-height:20px;color:#2b2b2b;letter-spacing:-0.6px;-webkit-text-stroke:0.3px #2b2b2b;">fx</div>
<div style="left:208px;top:186px;width:1704px;height:26px;background:#f9f9f9;border:1px solid #d9d9d9;border-radius:4px;box-sizing:border-box;"></div>
<div class="t" style="top:191.0px;font-size:12.5px;line-height:18px;color:#242424;letter-spacing:0.888px;left:219px;">booking</div>
<svg style="left:1895.5px;top:195.25px;" width="12" height="7.5" viewBox="0 0 12 7.5" fill="none"><path d="M1 1 L6.0 6.5 L11 1" stroke="#2b2b2b" stroke-width="1.3" stroke-linejoin="miter"/></svg>
<div style="left:0px;top:986px;width:1920px;height:54px;background:#f8f8f8;"></div>
<div style="left:0px;top:986px;width:1899px;height:1px;background:#dfdfdf;"></div>
<svg style="left:28px;top:996px;" width="8" height="12" viewBox="0 0 8 12" fill="none"><path d="M6.5 1 L1.5 6 L6.5 11" stroke="#9c9c9c" stroke-width="1.2"/></svg>
<svg style="left:60px;top:996px;" width="8" height="12" viewBox="0 0 8 12" fill="none"><path d="M1.5 1 L6.5 6 L1.5 11" stroke="#9c9c9c" stroke-width="1.2"/></svg>
<div style="left:115px;top:988px;width:74px;height:28px;background:#ededed;border-radius:5px;"></div>
<div style="left:117px;top:992px;width:70px;height:22px;background:linear-gradient(#e6e6e6 0%,#dcdddd 45%,#b9c0c2 80%,#9aa5a8 100%);border-radius:4px;"></div>
<div class="t" style="top:991.5px;font-size:13.5px;line-height:18px;color:#222;font-weight:700;letter-spacing:-0.144px;left:125px;">Données</div>
<div style="left:125px;top:1009px;width:56px;height:2px;background:#107c41;"></div>
<div style="left:193px;top:994px;width:1px;height:17px;background:#cfcfcf;"></div>
<div class="t" style="top:993.5px;font-size:13.5px;line-height:18px;color:#242424;letter-spacing:-0.147px;left:205px;">Analyse</div>
<div style="left:266px;top:994px;width:1px;height:17px;background:#cfcfcf;"></div>
<svg style="left:308px;top:995px;" width="13" height="13" viewBox="0 0 13 13" fill="none"><path d="M6.5 1 V12 M1 6.5 H12" stroke="#333" stroke-width="1.2"/></svg>
<div style="left:1154px;top:997px;width:2px;height:2px;background:#333;border-radius:1px;"></div>
<div style="left:1154px;top:1001px;width:2px;height:2px;background:#333;border-radius:1px;"></div>
<div style="left:1154px;top:1005px;width:2px;height:2px;background:#333;border-radius:1px;"></div>
<svg style="left:1175px;top:997px;" width="7" height="10" viewBox="0 0 7 10" fill="none"><path d="M6.5 0.5 V9.5 L0.5 5 Z" fill="#6a6a6a"/></svg>
<div style="left:1188px;top:997px;width:668px;height:9px;background:#787878;border-radius:4.5px;"></div>
<svg style="left:1886px;top:997px;" width="7" height="10" viewBox="0 0 7 10" fill="none"><path d="M0.5 0.5 V9.5 L6.5 5 Z" fill="#6a6a6a"/></svg>
<div class="t" style="top:1020.6px;font-size:11.5px;line-height:16px;color:#242424;letter-spacing:-0.272px;left:12px;">Prêt</div>
<svg style="left:50px;top:1021px;" width="17" height="16" viewBox="0 0 17 16" fill="none"><rect x="1" y="1.6" width="13.4" height="11.4" stroke="#333" stroke-width="1.1"/><path d="M1 4.4 H14.4 M3 7 H7 M3 9.6 H6" stroke="#333" stroke-width="1"/><circle cx="11" cy="10.6" r="3.6" fill="#f7f7f7" stroke="#333" stroke-width="1.1"/><circle cx="11" cy="10.6" r="1.5" fill="#333"/></svg>
<svg style="left:83px;top:1021px;" width="15" height="16" viewBox="0 0 15 16" fill="none"><circle cx="6.6" cy="2.6" r="1.7" stroke="#333" stroke-width="1"/><path d="M1 5.4 Q6.6 7.4 12.2 5.4 M4.6 6.6 V9.4 L2.4 14.6 M8.6 6.6 V9.4 L9.4 11" stroke="#333" stroke-width="1.1" stroke-linecap="round"/><path d="M9 10.4 L13.8 15.2 M13.8 10.4 L9 15.2" stroke="#333" stroke-width="1.1"/></svg>
<div class="t" style="top:1022.0px;font-size:11px;line-height:15px;color:#242424;font-weight:700;letter-spacing:-0.181px;left:101px;">Accessibilité : consultez nos recommandations</div>
<div class="t" style="top:1022.3px;font-size:11.5px;line-height:16px;color:#242424;letter-spacing:-0.192px;left:1242px;">Moyenne : 4166,697424</div>
<div class="t" style="top:1022.3px;font-size:11.5px;line-height:16px;color:#242424;letter-spacing:-0.113px;left:1378px;">Nb (non vides) : 12</div>
<div class="t" style="top:1022.3px;font-size:11.5px;line-height:16px;color:#242424;letter-spacing:-0.387px;left:1489px;">Somme : 45833,67167</div>
<div style="left:1617px;top:1019px;width:40px;height:21px;background:#e4e4e4;"></div>
<svg style="left:1629px;top:1021px;" width="15" height="15" viewBox="0 0 15 15" fill="none"><rect x="1" y="1" width="12.6" height="12.6" stroke="#333" stroke-width="1.1"/><path d="M1 5.2 H13.6 M1 9.4 H13.6 M5.2 1 V13.6 M9.4 1 V13.6" stroke="#333" stroke-width="1"/></svg>
<svg style="left:1670px;top:1021px;" width="15" height="15" viewBox="0 0 15 15" fill="none"><rect x="1" y="1" width="12.6" height="12.6" rx="1" stroke="#333" stroke-width="1.1"/><rect x="3.6" y="3.6" width="7.4" height="7.4" stroke="#333" stroke-width="1"/><path d="M5.2 6 H9.4 M5.2 8.2 H9.4" stroke="#333" stroke-width="0.9"/></svg>
<svg style="left:1710px;top:1021px;" width="15" height="15" viewBox="0 0 15 15" fill="none"><path d="M1 1 H13.6 V13.6 H1 Z M5.4 1 V7.8 M1 7.8 H13.6" stroke="#333" stroke-width="1.1"/></svg>
<div style="left:1743px;top:1028px;width:8px;height:1px;background:#333;"></div>
<div style="left:1756px;top:1028px;width:100px;height:1px;background:#8a8a8a;"></div>
<div style="left:1804px;top:1022px;width:5px;height:13px;background:#5a5a5a;border-radius:1px;"></div>
<svg style="left:1859px;top:1023px;" width="11" height="11" viewBox="0 0 11 11" fill="none"><path d="M5.5 1 V10 M1 5.5 H10" stroke="#333" stroke-width="1.1"/></svg>
<div class="t" style="top:1022.3px;font-size:11.5px;line-height:16px;color:#242424;letter-spacing:-0.521px;left:1882px;">100 %</div>
<div style="left:0px;top:1040px;width:1920px;height:40px;background:linear-gradient(90deg,#201f1c 0,#211f1c 38.5%,#2b2927 41%,#343230 46%,#353433 60%,#32312f 100%);"></div>
<svg style="left:16px;top:1052px;" width="17" height="17" viewBox="0 0 17 17" fill="none"><path d="M0 2.4 L7 1.4 V8 H0 Z M8 1.2 L17 0 V8 H8 Z M0 9 H7 V15.6 L0 14.6 Z M8 9 H17 V17 L8 15.8 Z" fill="#fff"/></svg>
<div style="left:48px;top:1040px;width:288px;height:40px;background:#f9f9f9;border-top:1px solid #cfcfcf;box-sizing:border-box;"></div>
<svg style="left:59px;top:1052px;" width="17" height="17" viewBox="0 0 17 17" fill="none"><circle cx="10" cy="6.6" r="5" stroke="#222" stroke-width="1.3"/><path d="M6.4 10.4 L1.4 15.6" stroke="#222" stroke-width="1.4"/></svg>
<div class="t" style="top:1050.5px;font-size:15px;line-height:20px;color:#2b2b2b;letter-spacing:-0.116px;left:88px;">Taper ici pour rechercher</div>
<div style="left:682px;top:1040px;width:49px;height:40px;background:#4a4a49;"></div>
<div style="left:392px;top:1078px;width:40px;height:2px;background:#76b9ed;"></div>
<div style="left:441px;top:1078px;width:40px;height:2px;background:#76b9ed;"></div>
<div style="left:588px;top:1078px;width:40px;height:2px;background:#76b9ed;"></div>
<div style="left:637px;top:1078px;width:40px;height:2px;background:#76b9ed;"></div>
<div style="left:682px;top:1078px;width:49px;height:2px;background:#76b9ed;"></div>
<svg style="left:351px;top:1049px;" width="24" height="22" viewBox="0 0 24 22" fill="none"><path d="M1 3.4 Q1 2 2.4 2 H8.6 L11 4.4 H21.6 Q23 4.4 23 5.8 V19 H1 Z" fill="#f6c445"/><path d="M1 7 H23 V18.6 Q23 20 21.6 20 H2.4 Q1 20 1 18.6 Z" fill="#fdd866"/><path d="M6 20 V14 H18 V20 H15 V16.6 H9 V20 Z" fill="#3a8fdd"/></svg>
<svg style="left:399px;top:1047px;" width="28" height="28" viewBox="0 0 28 28" fill="none"><circle cx="12" cy="12.4" r="11.4" fill="#e94335"/><path d="M12 12.4 L2.2 6.8 A11.4 11.4 0 0 0 10 23.6 Z" fill="#34a853"/><path d="M12 12.4 L10 23.6 A11.4 11.4 0 0 0 22.4 7.6 Z" fill="#fbbc05"/><circle cx="12" cy="12.4" r="5.4" fill="#fff"/><circle cx="12" cy="12.4" r="4.2" fill="#4285f4"/><circle cx="19.4" cy="19.6" r="7" fill="#c2185b"/><text x="19.4" y="22.4" font-family="Liberation Sans,sans-serif" font-size="8" fill="#fff" text-anchor="middle">r</text></svg>
<svg style="left:448px;top:1048px;" width="26" height="25" viewBox="0 0 26 25" fill="none"><path d="M3 6 Q9 -1 19 2 Q23 2 24 6 Q26 14 21 20 Q14 26 6 22 Q-1 16 3 6 Z" fill="#1d6fd1"/><path d="M1.6 10 Q6 2 15 3 Q8 6 8.6 13 Z" fill="#3f9bf0"/><ellipse cx="14" cy="14" rx="6.6" ry="5.6" fill="#dfeffd"/><path d="M8.4 12 L14 16.4 L19.6 12" stroke="#fff" stroke-width="1.4"/></svg>
<svg style="left:497px;top:1047px;" width="26" height="26" viewBox="0 0 26 26" fill="none"><path d="M3 10.5 V3 H10.5 M15.5 3 H23 V10.5 M14 23 H22.5 V14.5" stroke="#f0b71c" stroke-width="3.4"/><path d="M4 4 L12.5 12.5 M22 4 L13 13 V15.5 L20.5 21.5" stroke="#f0b71c" stroke-width="3.4" stroke-linejoin="round"/></svg>
<svg style="left:547px;top:1049px;" width="23" height="23" viewBox="0 0 23 23" fill="none"><rect x="0.6" y="0.6" width="21.8" height="21.8" rx="2.4" fill="#1469c7"/><path d="M3.4 7 Q8 6 11 12 Q10 17 7.4 17.4 Q7.6 13 3.4 7 Z M19.6 7 Q15 6 12 12 Q13 17 15.6 17.4 Q15.4 13 19.6 7 Z" stroke="#fff" stroke-width="1.2" fill="none"/><path d="M11.5 9 V18" stroke="#fff" stroke-width="1.2"/></svg>
<svg style="left:594px;top:1047px;" width="28" height="27" viewBox="0 0 28 27" fill="none"><path d="M3 2 L19 1 V17 L3 16 Z" fill="#d0d6de"/><path d="M4.6 3.6 L17.6 2.8 V15.2 L4.6 14.4 Z" fill="#1338c9"/><path d="M4.6 3.6 L12 3.2 L8 14.6 L4.6 14.4 Z" fill="#3f68ea"/><path d="M8 17 H15 V20 H18 V22.4 H5 V20 H8 Z" fill="#b8bec6"/><circle cx="20.4" cy="19.6" r="5.4" fill="#d9dde2"/><path d="M17.6 17.6 L19.6 19.6 L17.6 21.6 M23.2 17.6 L21.2 19.6 L23.2 21.6" stroke="#1c8a3c" stroke-width="1.4"/></svg>
<svg style="left:646px;top:1048px;" width="20" height="25" viewBox="0 0 20 25" fill="none"><rect x="0.6" y="0.6" width="18.8" height="23.8" rx="1.6" fill="#7d8288"/><rect x="2.6" y="2.6" width="14.8" height="5" fill="#4fc3e8"/><rect x="2.6" y="9.6" width="3.8" height="3.6" fill="#e6e8ea"/><rect x="7.8" y="9.6" width="3.8" height="3.6" fill="#e6e8ea"/><rect x="13.2" y="9.6" width="4.2" height="3.6" fill="#e6e8ea"/><rect x="2.6" y="14.4" width="3.8" height="3.6" fill="#e6e8ea"/><rect x="7.8" y="14.4" width="3.8" height="3.6" fill="#e6e8ea"/><rect x="2.6" y="19.2" width="3.8" height="3.6" fill="#e6e8ea"/><rect x="7.8" y="19.2" width="3.8" height="3.6" fill="#e6e8ea"/><rect x="13.2" y="14.4" width="4.2" height="8.4" fill="#1d5fa8"/></svg>
<svg style="left:693px;top:1048px;" width="27" height="25" viewBox="0 0 27 25" fill="none"><rect x="7" y="1" width="19" height="23" rx="1.6" fill="#21a366"/><rect x="16.5" y="1" width="9.5" height="7.6" fill="#33c481"/><rect x="16.5" y="8.6" width="9.5" height="7.6" fill="#107c41"/><rect x="7" y="16.2" width="19" height="7.8" fill="#185c37"/><rect x="7" y="8.6" width="9.5" height="7.6" fill="#107c41"/><rect x="0.6" y="6" width="14" height="14" rx="1.4" fill="#107c41"/><text x="7.6" y="17" font-family="Liberation Sans,sans-serif" font-size="11" font-weight="700" fill="#fff" text-anchor="middle">X</text></svg>
<svg style="left:1706px;top:1055px;" width="13" height="9" viewBox="0 0 13 9" fill="none"><path d="M1 7.6 L6.5 1.6 L12 7.6" stroke="#fff" stroke-width="1.3"/></svg>
<svg style="left:1731px;top:1052px;" width="13" height="17" viewBox="0 0 13 17" fill="none"><rect x="1" y="4.6" width="7.6" height="7.6" rx="1.6" stroke="#fff" stroke-width="1.2"/><path d="M8.6 7.4 L11.6 5.6 V11.2 L8.6 9.4" stroke="#fff" stroke-width="1.1"/><path d="M2 2.4 Q5.6 0.2 9.2 2.4 M2 14.6 Q5.6 16.8 9.2 14.6" stroke="#cfcfcf" stroke-width="1"/></svg>
<svg style="left:1755px;top:1055px;" width="15" height="13" viewBox="0 0 15 13" fill="none"><path d="M1.4 11 A11 11 0 0 1 11.6 1.4" stroke="#9a9a9a" stroke-width="1.1"/><path d="M4.4 11.6 A8 8 0 0 1 12 4.4" stroke="#c9c9c9" stroke-width="1.1"/><path d="M7.4 12 A5 5 0 0 1 12.4 7.4" stroke="#fff" stroke-width="1.2"/><circle cx="11.4" cy="11" r="1.5" fill="#fff"/></svg>
<svg style="left:1776px;top:1052px;" width="18" height="16" viewBox="0 0 18 16" fill="none"><path d="M1.6 5.6 H4 L7.6 2 V14 L4 10.4 H1.6 Z" stroke="#fff" stroke-width="1.1" stroke-linejoin="round"/><path d="M9.8 5.6 Q11.4 8 9.8 10.4" stroke="#fff" stroke-width="1"/><path d="M12 3.8 Q14.6 8 12 12.2" stroke="#e0e0e0" stroke-width="1"/><path d="M14.2 2 Q17.6 8 14.2 14" stroke="#9a9a9a" stroke-width="1"/></svg>
<div class="t" style="top:1043.5px;font-size:11.5px;line-height:14px;color:#fff;letter-spacing:-0.555px;left:1819px;">19:17</div>
<div class="t" style="top:1061.5px;font-size:11.5px;line-height:14px;color:#fff;letter-spacing:0.045px;left:1803px;">05/07/2024</div>
<svg style="left:1879px;top:1051px;" width="18" height="18" viewBox="0 0 18 18" fill="none"><path d="M1 1.6 H16.4 V13 H11.4 L8.8 15.6 L6.2 13 H1 Z" stroke="#fff" stroke-width="1.2" stroke-linejoin="round"/></svg>
<div style="left:1915px;top:1040px;width:1px;height:40px;background:#6a6a6a;"></div></div></body></html>
